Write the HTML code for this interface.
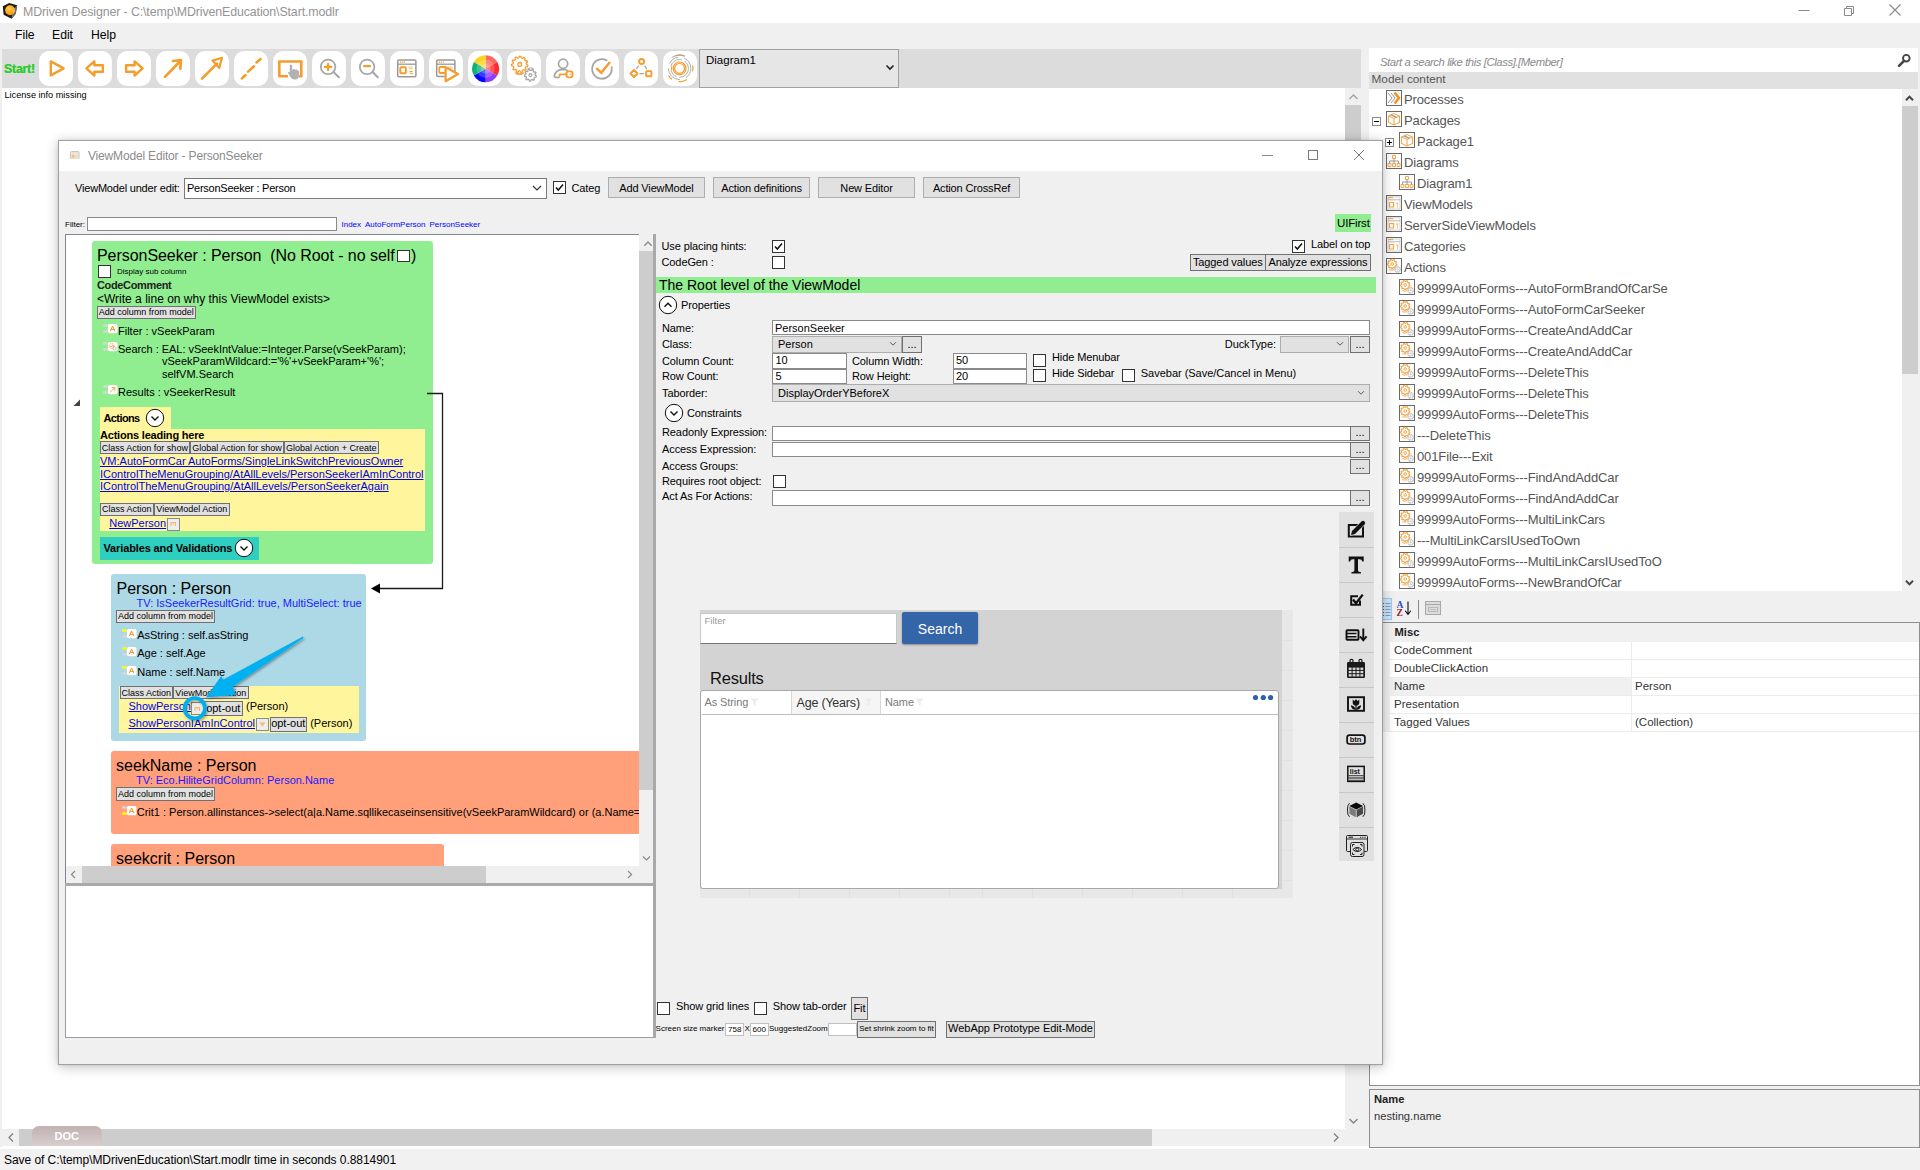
<!DOCTYPE html>
<html><head><meta charset="utf-8"><title>MDriven Designer</title><style>
html,body{margin:0;padding:0;}
body{width:1920px;height:1170px;overflow:hidden;background:#fff;font-family:"Liberation Sans",sans-serif;position:relative;}
.a{position:absolute;box-sizing:border-box;}
.t{position:absolute;white-space:nowrap;line-height:1;font-family:"Liberation Sans",sans-serif;}
.b{font-weight:bold;}
.i{font-style:italic;}
.u{text-decoration:underline;}
.btn{position:absolute;box-sizing:border-box;background:#e1e1e1;border:1px solid #707070;}
.inp{position:absolute;box-sizing:border-box;background:#fff;border:1px solid #7a7a7a;}
.chk{position:absolute;box-sizing:border-box;background:#fff;border:1px solid #333;width:13px;height:13px;}
</style></head><body>
<div class="a" style="left:0px;top:0px;width:1920px;height:23px;background:#fff;"></div>
<svg class="a" style="left:0px;top:0px;" width="22" height="22" viewBox="0 0 22 22"><defs><radialGradient id="og" cx="0.42" cy="0.35" r="0.75"><stop offset="0" stop-color="#ffd24a"/><stop offset="0.55" stop-color="#ffa620"/><stop offset="1" stop-color="#ff8a00"/></radialGradient></defs><path d="M2.8 6.2 L9.2 3 L17.1 5.3 L15.8 13.7 L11.5 18.8 L3.6 14.7 Z" fill="#1c1c1c"/><path d="M17.1 5.3 L15.8 13.7 L11.5 18.8 L12.3 10.5 Z" fill="#6e6e6e"/><circle cx="10" cy="10.25" r="4.9" fill="url(#og)"/><path d="M13.6 7.2 Q15.6 10.4 13.2 13.6 Q14.2 10.4 13.6 7.2 Z" fill="#fff6a0" opacity="0.8"/></svg>
<div class="t" style="left:23px;top:6.00px;font-size:12.4px;color:#949494;letter-spacing:-0.12px">MDriven Designer - C:\temp\MDrivenEducation\Start.modlr</div>
<svg class="a" style="left:1797px;top:4px;" width="16" height="12" viewBox="0 0 16 12"><path d="M1.5 6.5H12.5" stroke="#8a8a8a" stroke-width="1" fill="none"/></svg>
<svg class="a" style="left:1842px;top:3px;" width="14" height="14" viewBox="0 0 14 14"><path d="M2.5 5.5h7v7h-7z M4.5 5.5v-2h7v7h-2" stroke="#8a8a8a" stroke-width="1" fill="none"/></svg>
<svg class="a" style="left:1888px;top:3px;" width="14" height="14" viewBox="0 0 14 14"><path d="M1.5 1.5L12.5 12.5M12.5 1.5L1.5 12.5" stroke="#8a8a8a" stroke-width="1.1" fill="none"/></svg>
<div class="a" style="left:0px;top:23px;width:1920px;height:26px;background:#f0f0f0;"></div>
<div class="t" style="left:15px;top:29.17px;font-size:12.2px;color:#000;">File</div>
<div class="t" style="left:52px;top:29.17px;font-size:12.2px;color:#000;">Edit</div>
<div class="t" style="left:91px;top:29.17px;font-size:12.2px;color:#000;">Help</div>
<div class="a" style="left:2px;top:49px;width:1366px;height:39px;background:#dcdcdc;"></div>
<div class="a" style="left:1361px;top:49px;width:8px;height:39px;background:#f0f0f0;"></div>
<div class="t" style="left:4px;top:62.92px;font-size:12.5px;color:#2ecc2e;font-weight:bold;letter-spacing:-0.3px;text-shadow:0 0 0.6px #2ecc2e">Start!</div>
<div class="a" style="left:39px;top:51px;width:34px;height:35px;background:#fff;border-radius:10px;"></div>
<svg class="a" style="left:39px;top:51px;" width="34" height="35" viewBox="0 0 34 35"><path d="M11.8 10.4 L11.8 24.4 L24.6 17.4 Z" fill="none" stroke="#f59c2a" stroke-width="2.4" stroke-linejoin="round"/></svg>
<div class="a" style="left:78px;top:51px;width:34px;height:35px;background:#fff;border-radius:10px;"></div>
<svg class="a" style="left:78px;top:51px;" width="34" height="35" viewBox="0 0 34 35"><path d="M8.4 17.4 L16.4 10.4 L16.4 14.2 L24.9 14.2 L24.9 20.7 L16.4 20.7 L16.4 24.5 Z" fill="none" stroke="#f59c2a" stroke-width="2.4" stroke-linejoin="round"/></svg>
<div class="a" style="left:117px;top:51px;width:34px;height:35px;background:#fff;border-radius:10px;"></div>
<svg class="a" style="left:117px;top:51px;" width="34" height="35" viewBox="0 0 34 35"><path d="M25.6 17.4 L17.6 10.4 L17.6 14.2 L9.1 14.2 L9.1 20.7 L17.6 20.7 L17.6 24.5 Z" fill="none" stroke="#f59c2a" stroke-width="2.4" stroke-linejoin="round"/></svg>
<div class="a" style="left:156px;top:51px;width:34px;height:35px;background:#fff;border-radius:10px;"></div>
<svg class="a" style="left:156px;top:51px;" width="34" height="35" viewBox="0 0 34 35"><path d="M9 25.9 L24.6 9.7 M17 10 L25 9.2 L24.3 17.6" stroke="#f59c2a" stroke-width="2.7" fill="none" stroke-linecap="round" stroke-linejoin="round"/></svg>
<div class="a" style="left:195px;top:51px;width:34px;height:35px;background:#fff;border-radius:10px;"></div>
<svg class="a" style="left:195px;top:51px;" width="34" height="35" viewBox="0 0 34 35"><path d="M7 27.6 L22 12.6" stroke="#f59c2a" stroke-width="2.6" fill="none" stroke-linecap="round"/><path d="M17.5 9.6 L27 6.8 L24.3 16.9 Z" fill="none" stroke="#f59c2a" stroke-width="2.2" stroke-linejoin="round"/></svg>
<div class="a" style="left:234px;top:51px;width:34px;height:35px;background:#fff;border-radius:10px;"></div>
<svg class="a" style="left:234px;top:51px;" width="34" height="35" viewBox="0 0 34 35"><path d="M7.9 27.5 L11.6 24 M14.1 20.6 L20 15.25 M22.5 11.5 L26.6 8" stroke="#f59c2a" stroke-width="2.5" fill="none" stroke-linecap="round"/></svg>
<div class="a" style="left:273px;top:51px;width:34px;height:35px;background:#fff;border-radius:10px;"></div>
<svg class="a" style="left:273px;top:51px;" width="34" height="35" viewBox="0 0 34 35"><path d="M15 25.2 H6.3 V10.5 H28.3 V25.2 H25.8" fill="none" stroke="#f59c2a" stroke-width="2.6" stroke-linejoin="round"/><path d="M16.8 14.2 q1.2 -1.6 2.4 0 v5 l1.4 -1.1 q1.2 -0.6 1.6 0.6 l1.2 -0.3 q1.1 0 1.2 1 l0.6 0 q0.9 0.3 0.8 1.4 v3.5 q-0.3 4.2 -4 4.2 q-3.2 0.2 -4.6 -2.6 l-2.4 -4.2 q0 -1.6 1.8 -0.8 z" fill="#b2b2b2"/></svg>
<div class="a" style="left:312px;top:51px;width:34px;height:35px;background:#fff;border-radius:10px;"></div>
<svg class="a" style="left:312px;top:51px;" width="34" height="35" viewBox="0 0 34 35"><circle cx="16.1" cy="15.9" r="7.3" fill="none" stroke="#a6a6a6" stroke-width="1.7"/><path d="M21.5 21 L26.8 26.3" stroke="#a6a6a6" stroke-width="2" fill="none" stroke-linecap="round"/><path d="M13 15.9h6.2M16.1 12.8v6.2" stroke="#f59c2a" stroke-width="2.3" fill="none" stroke-linecap="round"/></svg>
<div class="a" style="left:351px;top:51px;width:34px;height:35px;background:#fff;border-radius:10px;"></div>
<svg class="a" style="left:351px;top:51px;" width="34" height="35" viewBox="0 0 34 35"><circle cx="16.1" cy="15.9" r="7.3" fill="none" stroke="#a6a6a6" stroke-width="1.7"/><path d="M21.5 21 L26.8 26.3" stroke="#a6a6a6" stroke-width="2" fill="none" stroke-linecap="round"/><path d="M13.2 15.2h5.8" stroke="#f59c2a" stroke-width="2.3" fill="none" stroke-linecap="round"/></svg>
<div class="a" style="left:390px;top:51px;width:34px;height:35px;background:#fff;border-radius:10px;"></div>
<svg class="a" style="left:390px;top:51px;" width="34" height="35" viewBox="0 0 34 35"><rect x="7.7" y="9" width="18.2" height="16.8" rx="1.2" fill="none" stroke="#999" stroke-width="1.5"/><path d="M7.7 13.2h18.2" stroke="#999" stroke-width="1.3"/><path d="M9.8 11.2h5" stroke="#f59c2a" stroke-width="1.3" stroke-dasharray="1.2 0.7"/><rect x="10.3" y="16.3" width="5.6" height="6" rx="1" fill="none" stroke="#f59c2a" stroke-width="1.9"/><rect x="18.6" y="15.4" width="4" height="3" fill="#fbd3a0"/><path d="M19.5 20.6h3.2M20.5 22.7h2.2" stroke="#f59c2a" stroke-width="1.2"/></svg>
<div class="a" style="left:429px;top:51px;width:34px;height:35px;background:#fff;border-radius:10px;"></div>
<svg class="a" style="left:429px;top:51px;" width="34" height="35" viewBox="0 0 34 35"><rect x="7.7" y="9" width="18.2" height="16.4" rx="1.2" fill="none" stroke="#999" stroke-width="1.5"/><path d="M7.7 13.2h18.2" stroke="#999" stroke-width="1.3"/><path d="M9.8 11.2h5" stroke="#f59c2a" stroke-width="1.3" stroke-dasharray="1.2 0.7"/><rect x="10.3" y="16" width="6.5" height="6" rx="1" fill="none" stroke="#f59c2a" stroke-width="1.8"/><rect x="18.6" y="15.4" width="5" height="2.4" fill="#fbd3a0"/><path d="M16.6 16.3 L16.6 30.2 L29 23 Z" fill="#fff" stroke="#f59c2a" stroke-width="2.2" stroke-linejoin="round"/></svg>
<div class="a" style="left:468px;top:51px;width:34px;height:35px;background:#fff;border-radius:10px;"></div>
<svg class="a" style="left:468px;top:51px;" width="34" height="35" viewBox="0 0 34 35"><path d="M17.6 17.75 L17.60 4.25 A13.5 13.5 0 0 1 29.35 11.10 Z" fill="#ff6a60"/><path d="M17.6 17.75 L29.29 11.00 A13.5 13.5 0 0 1 29.23 24.60 Z" fill="#ff2a2e"/><path d="M17.6 17.75 L29.29 24.50 A13.5 13.5 0 0 1 17.48 31.25 Z" fill="#8f3cff"/><path d="M17.6 17.75 L17.60 31.25 A13.5 13.5 0 0 1 5.85 24.40 Z" fill="#0808ff"/><path d="M17.6 17.75 L5.91 24.50 A13.5 13.5 0 0 1 5.97 10.90 Z" fill="#10b27c"/><path d="M17.6 17.75 L5.91 11.00 A13.5 13.5 0 0 1 17.72 4.25 Z" fill="#ffd21f"/><circle cx="17.6" cy="17.75" r="9.2" fill="#fff" opacity="0.2"/><circle cx="17.6" cy="17.75" r="5" fill="#fff" opacity="0.22"/></svg>
<div class="a" style="left:507px;top:51px;width:34px;height:35px;background:#fff;border-radius:10px;"></div>
<svg class="a" style="left:507px;top:51px;" width="34" height="35" viewBox="0 0 34 35"><path d="M19.35 13.40 L20.91 14.24 L20.62 15.71 L18.86 15.90 L18.30 16.97 L19.16 18.52 L18.12 19.60 L16.54 18.81 L15.49 19.40 L15.37 21.17 L13.92 21.52 L13.01 19.99 L11.81 19.93 L10.76 21.35 L9.34 20.86 L9.41 19.09 L8.43 18.39 L6.77 19.01 L5.85 17.83 L6.86 16.38 L6.42 15.26 L4.69 14.89 L4.55 13.40 L6.18 12.72 L6.42 11.54 L5.16 10.29 L5.85 8.97 L7.59 9.28 L8.43 8.41 L8.04 6.68 L9.34 5.94 L10.64 7.15 L11.81 6.87 L12.42 5.21 L13.92 5.28 L14.35 7.00 L15.49 7.40 L16.90 6.33 L18.12 7.20 L17.56 8.88 L18.30 9.83 L20.07 9.70 L20.62 11.09 L19.24 12.20 Z" fill="none" stroke="#f59c2a" stroke-width="1.25" stroke-linejoin="round"/><circle cx="12.75" cy="13.4" r="1.9" fill="none" stroke="#f59c2a" stroke-width="1.3"/><path d="M7.8 21.8 q5 2.2 9.6 0" stroke="#f59c2a" stroke-width="1.2" fill="none"/><path d="M9.5 23.3 q3.2 1 6 0" stroke="#f59c2a" stroke-width="0.9" fill="none"/><path d="M28.10 24.10 L29.35 24.85 L29.04 26.15 L27.58 26.25 L27.00 27.12 L27.48 28.50 L26.40 29.30 L25.22 28.43 L24.22 28.73 L23.69 30.09 L22.36 30.01 L22.01 28.59 L21.05 28.17 L19.77 28.88 L18.80 27.96 L19.45 26.65 L18.98 25.71 L17.55 25.43 L17.40 24.10 L18.74 23.51 L18.98 22.49 L18.06 21.36 L18.80 20.24 L20.21 20.65 L21.05 20.03 L21.07 18.57 L22.36 18.19 L23.17 19.41 L24.22 19.47 L25.17 18.37 L26.40 18.90 L26.24 20.36 L27.00 21.08 L28.44 20.85 L29.04 22.05 L27.98 23.06 Z" fill="none" stroke="#a6a6a6" stroke-width="1.25" stroke-linejoin="round"/><circle cx="23.4" cy="24.1" r="1.5" fill="none" stroke="#a6a6a6" stroke-width="1.2"/><path d="M20.5 17.6 q3 -1.6 6 0" stroke="#a6a6a6" stroke-width="0.9" fill="none"/></svg>
<div class="a" style="left:546px;top:51px;width:34px;height:35px;background:#fff;border-radius:10px;"></div>
<svg class="a" style="left:546px;top:51px;" width="34" height="35" viewBox="0 0 34 35"><circle cx="17.1" cy="12.75" r="4.6" fill="none" stroke="#a6a6a6" stroke-width="1.7"/><path d="M13 26.3 H9.5 Q8 26.3 8.4 24.6 Q9.8 18.6 17 18.3 Q19.6 18.4 21.2 19.4" fill="none" stroke="#a6a6a6" stroke-width="1.7" stroke-linecap="round"/><rect x="20.5" y="20.4" width="6" height="6" rx="1.8" fill="none" stroke="#f59c2a" stroke-width="1.9"/><path d="M20.5 23.4 H14.2 Q13.2 23.6 13.6 24.8" stroke="#f59c2a" stroke-width="1.9" fill="none" stroke-linecap="round"/><circle cx="24.2" cy="23.2" r="0.7" fill="#f59c2a"/></svg>
<div class="a" style="left:585px;top:51px;width:34px;height:35px;background:#fff;border-radius:10px;"></div>
<svg class="a" style="left:585px;top:51px;" width="34" height="35" viewBox="0 0 34 35"><path d="M21.6 9.3 A9.8 9.8 0 1 0 26.6 16.2" fill="none" stroke="#a6a6a6" stroke-width="1.8" stroke-linecap="round"/><path d="M11.3 17.1 L16.3 21.8 L25 10.9" fill="none" stroke="#f59c2a" stroke-width="2.4" stroke-linejoin="miter"/></svg>
<div class="a" style="left:624px;top:51px;width:34px;height:35px;background:#fff;border-radius:10px;"></div>
<svg class="a" style="left:624px;top:51px;" width="34" height="35" viewBox="0 0 34 35"><circle cx="17.6" cy="10.5" r="2.5" fill="none" stroke="#f59c2a" stroke-width="1.9"/><path d="M10 19 l3.5 3.5 l-3.5 3.5 l-3.5 -3.5 z" fill="none" stroke="#f59c2a" stroke-width="1.9" stroke-linejoin="round"/><rect x="22.2" y="20.1" width="5.2" height="5.2" rx="0.6" fill="none" stroke="#f59c2a" stroke-width="1.9"/><path d="M14.6 14.6 l-2.2 3.2 M20.6 14.6 l2.2 3.2 M15.5 22.7 h4.4" stroke="#a6a6a6" stroke-width="1.2" fill="none"/></svg>
<div class="a" style="left:663px;top:51px;width:34px;height:35px;background:#fff;border-radius:10px;"></div>
<svg class="a" style="left:663px;top:51px;" width="34" height="35" viewBox="0 0 34 35"><circle cx="16.6" cy="17.4" r="4.9" fill="none" stroke="#f59c2a" stroke-width="1.2"/><circle cx="16.6" cy="17.4" r="6.4" fill="none" stroke="#f59c2a" stroke-width="1.2"/><circle cx="16.6" cy="17.4" r="8.9" fill="none" stroke="#a6a6a6" stroke-width="0.9" stroke-dasharray="14 3 9 4"/><circle cx="16.6" cy="17.4" r="11.2" fill="none" stroke="#a6a6a6" stroke-width="0.9" stroke-dasharray="11 6 18 5"/><path d="M8.6 19 v-3.4" stroke="#f59c2a" stroke-width="1.2"/><circle cx="16.6" cy="17.4" r="13.3" fill="none" stroke="#f59c2a" stroke-width="1.2" stroke-dasharray="7 9 0 4 6 10 9 7 5 24" transform="rotate(-100 16.6 17.4)"/><circle cx="16.6" cy="17.4" r="13.3" fill="none" stroke="#a6a6a6" stroke-width="0.9" stroke-dasharray="0 40 14 100" transform="rotate(60 16.6 17.4)"/></svg>
<div class="a" style="left:699px;top:49px;width:200px;height:39px;background:#e6e6e6;border:1px solid #a0a0a0;"></div>
<div class="t" style="left:706px;top:54.77px;font-size:11.5px;color:#000;">Diagram1</div>
<svg class="a" style="left:885px;top:64px;" width="10" height="8" viewBox="0 0 10 8"><path d="M1.5 1.5 L5 5 L8.5 1.5" stroke="#222" stroke-width="1.6" fill="none"/></svg>
<div class="t" style="left:4.5px;top:91.05px;font-size:9.15px;color:#000;">License info missing</div>
<div class="a" style="left:1345px;top:88px;width:16px;height:1041px;background:#f0f0f0;"></div>
<div class="a" style="left:1345px;top:105px;width:16px;height:38px;background:#cdcdcd;"></div>
<svg class="a" style="left:1348px;top:93px;" width="11" height="8" viewBox="0 0 11 8"><path d="M1.5 6 L5.5 2 L9.5 6" stroke="#a0a0a0" stroke-width="1.3" fill="none"/></svg>
<svg class="a" style="left:1348px;top:1117px;" width="11" height="8" viewBox="0 0 11 8"><path d="M1.5 2 L5.5 6 L9.5 2" stroke="#808080" stroke-width="1.3" fill="none"/></svg>
<div class="a" style="left:1361px;top:88px;width:8px;height:1058px;background:#f0f0f0;"></div>
<div class="a" style="left:0px;top:1129px;width:1345px;height:17px;background:#f0f0f0;"></div>
<div class="a" style="left:19px;top:1129px;width:1133px;height:17px;background:#cdcdcd;"></div>
<svg class="a" style="left:7px;top:1132px;" width="8" height="11" viewBox="0 0 8 11"><path d="M6 1.5 L2 5.5 L6 9.5" stroke="#808080" stroke-width="1.3" fill="none"/></svg>
<svg class="a" style="left:1332px;top:1132px;" width="8" height="11" viewBox="0 0 8 11"><path d="M2 1.5 L6 5.5 L2 9.5" stroke="#808080" stroke-width="1.3" fill="none"/></svg>
<div class="a" style="left:1345px;top:1129px;width:17px;height:17px;background:#f0f0f0;"></div>
<div class="a" style="left:32px;top:1126px;width:70px;height:20px;border-radius:7px 7px 0 0;background:linear-gradient(#c2b2b2,#d9cdcd);"></div>
<div class="t" style="left:54.5px;top:1131.19px;font-size:11px;color:#fff;font-weight:bold;">DOC</div>
<div class="a" style="left:0px;top:49px;width:2px;height:1098px;background:#f0f0f0;"></div>
<div class="a" style="left:0px;top:1149px;width:1920px;height:21px;background:#f1f1f1;"></div>
<div class="t" style="left:4px;top:1153.64px;font-size:12px;color:#000;letter-spacing:-0.06px">Save of C:\temp\MDrivenEducation\Start.modlr time in seconds 0.8814901</div>
<div class="a" style="left:1369px;top:48px;width:551px;height:24px;background:#fff;"></div>
<div class="t" style="left:1380px;top:56.93px;font-size:11.3px;color:#8a8a8a;font-style:italic;letter-spacing:-0.42px">Start a search like this [Class].[Member]</div>
<svg class="a" style="left:1897px;top:53px;" width="15" height="15" viewBox="0 0 15 15"><circle cx="9.3" cy="5.2" r="3.3" fill="none" stroke="#444" stroke-width="1.9"/><path d="M7 7.8 L2 12.8" stroke="#444" stroke-width="2.6" stroke-linecap="round"/></svg>
<div class="a" style="left:1369px;top:72px;width:551px;height:17px;background:#e1e1e1;"></div>
<div class="t" style="left:1371.5px;top:74.31px;font-size:11.8px;color:#555;letter-spacing:0px">Model content</div>
<div class="a" style="left:1369px;top:89px;width:533px;height:502px;background:#fff;"></div>
<div class="a" style="left:1902px;top:89px;width:16px;height:502px;background:#f0f0f0;"></div>
<div class="a" style="left:1902px;top:106px;width:16px;height:268px;background:#cdcdcd;"></div>
<svg class="a" style="left:1904px;top:94px;" width="11" height="8" viewBox="0 0 11 8"><path d="M2 6.2 L5.5 2.6 L9 6.2" stroke="#444" stroke-width="2" fill="none"/></svg>
<svg class="a" style="left:1904px;top:579px;" width="11" height="8" viewBox="0 0 11 8"><path d="M2 1.8 L5.5 5.4 L9 1.8" stroke="#444" stroke-width="2" fill="none"/></svg>
<div class="a" style="left:1918px;top:48px;width:2px;height:574px;background:#f0f0f0;"></div>
<svg class="a" style="left:1386px;top:90px;" width="16" height="16" viewBox="0 0 16 16"><rect x="0.5" y="0.5" width="15" height="15" fill="#fff" stroke="#6a6a6a" stroke-width="1"/><path d="M2 3 L6 8 L2 13 M5 3 L9 8 L5 13" fill="none" stroke="#9a9a9a" stroke-width="1"/><path d="M8.5 2.5 L13 8 L8.5 13.5" fill="none" stroke="#f7941d" stroke-width="2.6"/></svg>
<div class="t" style="left:1404px;top:93.20px;font-size:13px;color:#555;letter-spacing:-0.12px">Processes</div>
<svg class="a" style="left:1386px;top:111px;" width="16" height="16" viewBox="0 0 16 16"><rect x="0.5" y="0.5" width="15" height="15" fill="#fff" stroke="#6a6a6a" stroke-width="1"/><path d="M2.5 5 L8 2.5 L13.5 5 V11.5 L8 14 L2.5 11.5 Z M2.5 5 L8 7.5 L13.5 5 M8 7.5 V14" fill="none" stroke="#f5a94a" stroke-width="1.1"/><path d="M5 3.8 L10.5 6.3" stroke="#9a9a9a" stroke-width="1.4"/></svg>
<div class="t" style="left:1404px;top:114.20px;font-size:13px;color:#555;letter-spacing:-0.12px">Packages</div>
<svg class="a" style="left:1372px;top:116.5px;" width="9" height="9" viewBox="0 0 9 9"><rect x="0.5" y="0.5" width="8" height="8" fill="#fff" stroke="#8a8a8a"/><path d="M2 4.5H7" stroke="#000" stroke-width="1"/></svg>
<svg class="a" style="left:1399px;top:132px;" width="16" height="16" viewBox="0 0 16 16"><rect x="0.5" y="0.5" width="15" height="15" fill="#fff" stroke="#6a6a6a" stroke-width="1"/><path d="M2.5 5 L8 2.5 L13.5 5 V11.5 L8 14 L2.5 11.5 Z M2.5 5 L8 7.5 L13.5 5 M8 7.5 V14" fill="none" stroke="#f5a94a" stroke-width="1.1"/><path d="M5 3.8 L10.5 6.3" stroke="#9a9a9a" stroke-width="1.4"/></svg>
<div class="t" style="left:1417px;top:135.20px;font-size:13px;color:#555;letter-spacing:-0.12px">Package1</div>
<svg class="a" style="left:1385px;top:137.5px;" width="9" height="9" viewBox="0 0 9 9"><rect x="0.5" y="0.5" width="8" height="8" fill="#fff" stroke="#8a8a8a"/><path d="M2 4.5H7" stroke="#000" stroke-width="1"/><path d="M4.5 2V7" stroke="#000" stroke-width="1"/></svg>
<svg class="a" style="left:1386px;top:153px;" width="16" height="16" viewBox="0 0 16 16"><rect x="0.5" y="0.5" width="15" height="15" fill="#fff" stroke="#6a6a6a" stroke-width="1"/><path d="M6.5 2.5h3v3h-3z M2 10.5h3v3h-3z M6.5 10.5h3v3h-3z M11 10.5h3v3h-3z" fill="none" stroke="#f5a94a" stroke-width="1"/><path d="M8 5.5V10.5M3.5 10.5V8H12.5V10.5" fill="none" stroke="#9a9a9a" stroke-width="1"/></svg>
<div class="t" style="left:1404px;top:156.20px;font-size:13px;color:#555;letter-spacing:-0.12px">Diagrams</div>
<svg class="a" style="left:1399px;top:174px;" width="16" height="16" viewBox="0 0 16 16"><rect x="0.5" y="0.5" width="15" height="15" fill="#fff" stroke="#6a6a6a" stroke-width="1"/><path d="M6.5 2.5h3v3h-3z M2 10.5h3v3h-3z M6.5 10.5h3v3h-3z M11 10.5h3v3h-3z" fill="none" stroke="#f5a94a" stroke-width="1"/><path d="M8 5.5V10.5M3.5 10.5V8H12.5V10.5" fill="none" stroke="#9a9a9a" stroke-width="1"/></svg>
<div class="t" style="left:1417px;top:177.20px;font-size:13px;color:#555;letter-spacing:-0.12px">Diagram1</div>
<svg class="a" style="left:1386px;top:195px;" width="16" height="16" viewBox="0 0 16 16"><rect x="0.5" y="0.5" width="15" height="15" fill="#fff" stroke="#6a6a6a" stroke-width="1"/><rect x="2" y="2" width="12" height="12" fill="none" stroke="#c8c8c8" stroke-width="0.8"/><path d="M2 4.8H14" stroke="#b0b0b0" stroke-width="0.9"/><path d="M2 2.6h5" stroke="#f5a94a" stroke-width="1.1"/><path d="M3.5 7.5h4v4.5h-4z" fill="none" stroke="#f5a94a" stroke-width="1.2"/><path d="M9.5 8h3M11.5 8v4.5" stroke="#f5a94a" stroke-width="1" fill="none" opacity="0.7"/></svg>
<div class="t" style="left:1404px;top:198.20px;font-size:13px;color:#555;letter-spacing:-0.12px">ViewModels</div>
<svg class="a" style="left:1386px;top:216px;" width="16" height="16" viewBox="0 0 16 16"><rect x="0.5" y="0.5" width="15" height="15" fill="#fff" stroke="#6a6a6a" stroke-width="1"/><rect x="2" y="2" width="12" height="12" fill="none" stroke="#c8c8c8" stroke-width="0.8"/><path d="M2 4.8H14" stroke="#b0b0b0" stroke-width="0.9"/><path d="M2 2.6h5" stroke="#f5a94a" stroke-width="1.1"/><path d="M3.5 7.5h4v4.5h-4z" fill="none" stroke="#f5a94a" stroke-width="1.2"/><path d="M9.5 8h3M11.5 8v4.5" stroke="#f5a94a" stroke-width="1" fill="none" opacity="0.7"/></svg>
<div class="t" style="left:1404px;top:219.20px;font-size:13px;color:#555;letter-spacing:-0.12px">ServerSideViewModels</div>
<svg class="a" style="left:1386px;top:237px;" width="16" height="16" viewBox="0 0 16 16"><rect x="0.5" y="0.5" width="15" height="15" fill="#fff" stroke="#6a6a6a" stroke-width="1"/><rect x="2" y="2" width="12" height="12" fill="none" stroke="#c8c8c8" stroke-width="0.8"/><path d="M2 4.8H14" stroke="#b0b0b0" stroke-width="0.9"/><path d="M2 2.6h5" stroke="#f5a94a" stroke-width="1.1"/><path d="M3.5 7.5h4v4.5h-4z" fill="none" stroke="#f5a94a" stroke-width="1.2"/><path d="M9.5 8h3M11.5 8v4.5" stroke="#f5a94a" stroke-width="1" fill="none" opacity="0.7"/></svg>
<div class="t" style="left:1404px;top:240.20px;font-size:13px;color:#555;letter-spacing:-0.12px">Categories</div>
<svg class="a" style="left:1386px;top:258px;" width="16" height="16" viewBox="0 0 16 16"><rect x="0.5" y="0.5" width="15" height="15" fill="#fff" stroke="#6a6a6a" stroke-width="1"/><path d="M9.90 6.00 L10.86 6.59 L10.62 7.61 L9.49 7.69 L9.03 8.38 L9.39 9.45 L8.55 10.07 L7.63 9.41 L6.84 9.64 L6.43 10.69 L5.38 10.63 L5.11 9.53 L4.35 9.20 L3.36 9.74 L2.60 9.02 L3.09 8.00 L2.72 7.27 L1.62 7.04 L1.50 6.00 L2.53 5.54 L2.72 4.73 L2.02 3.85 L2.60 2.98 L3.69 3.29 L4.35 2.80 L4.38 1.67 L5.38 1.37 L6.02 2.30 L6.84 2.36 L7.59 1.51 L8.55 1.93 L8.44 3.05 L9.03 3.62 L10.15 3.45 L10.62 4.39 L9.81 5.18 Z" fill="none" stroke="#f5a94a" stroke-width="1.1" stroke-linejoin="round"/><circle cx="6.2" cy="6" r="1.3" fill="none" stroke="#f5a94a" stroke-width="1"/><path d="M3.2 11.6q3 1.2 5 0" stroke="#f5a94a" stroke-width="0.9" fill="none"/><path d="M13.90 11.40 L14.67 11.84 L14.46 12.59 L13.58 12.57 L13.23 13.03 L13.46 13.88 L12.79 14.26 L12.17 13.63 L11.60 13.70 L11.16 14.47 L10.41 14.26 L10.43 13.38 L9.97 13.03 L9.12 13.26 L8.74 12.59 L9.37 11.97 L9.30 11.40 L8.53 10.96 L8.74 10.21 L9.62 10.23 L9.97 9.77 L9.74 8.92 L10.41 8.54 L11.03 9.17 L11.60 9.10 L12.04 8.33 L12.79 8.54 L12.77 9.42 L13.23 9.77 L14.08 9.54 L14.46 10.21 L13.83 10.83 Z" fill="none" stroke="#c0c0c0" stroke-width="1" stroke-linejoin="round"/><circle cx="11.6" cy="11.4" r="0.8" fill="none" stroke="#c0c0c0" stroke-width="0.8"/></svg>
<div class="t" style="left:1404px;top:261.20px;font-size:13px;color:#555;letter-spacing:-0.12px">Actions</div>
<svg class="a" style="left:1399px;top:279px;" width="16" height="16" viewBox="0 0 16 16"><rect x="0.5" y="0.5" width="15" height="15" fill="#fff" stroke="#6a6a6a" stroke-width="1"/><path d="M9.90 6.00 L10.86 6.59 L10.62 7.61 L9.49 7.69 L9.03 8.38 L9.39 9.45 L8.55 10.07 L7.63 9.41 L6.84 9.64 L6.43 10.69 L5.38 10.63 L5.11 9.53 L4.35 9.20 L3.36 9.74 L2.60 9.02 L3.09 8.00 L2.72 7.27 L1.62 7.04 L1.50 6.00 L2.53 5.54 L2.72 4.73 L2.02 3.85 L2.60 2.98 L3.69 3.29 L4.35 2.80 L4.38 1.67 L5.38 1.37 L6.02 2.30 L6.84 2.36 L7.59 1.51 L8.55 1.93 L8.44 3.05 L9.03 3.62 L10.15 3.45 L10.62 4.39 L9.81 5.18 Z" fill="none" stroke="#f5a94a" stroke-width="1.1" stroke-linejoin="round"/><circle cx="6.2" cy="6" r="1.3" fill="none" stroke="#f5a94a" stroke-width="1"/><path d="M3.2 11.6q3 1.2 5 0" stroke="#f5a94a" stroke-width="0.9" fill="none"/><path d="M13.90 11.40 L14.67 11.84 L14.46 12.59 L13.58 12.57 L13.23 13.03 L13.46 13.88 L12.79 14.26 L12.17 13.63 L11.60 13.70 L11.16 14.47 L10.41 14.26 L10.43 13.38 L9.97 13.03 L9.12 13.26 L8.74 12.59 L9.37 11.97 L9.30 11.40 L8.53 10.96 L8.74 10.21 L9.62 10.23 L9.97 9.77 L9.74 8.92 L10.41 8.54 L11.03 9.17 L11.60 9.10 L12.04 8.33 L12.79 8.54 L12.77 9.42 L13.23 9.77 L14.08 9.54 L14.46 10.21 L13.83 10.83 Z" fill="none" stroke="#c0c0c0" stroke-width="1" stroke-linejoin="round"/><circle cx="11.6" cy="11.4" r="0.8" fill="none" stroke="#c0c0c0" stroke-width="0.8"/></svg>
<div class="t" style="left:1417px;top:282.20px;font-size:13px;color:#555;letter-spacing:-0.12px">99999AutoForms---AutoFormBrandOfCarSe</div>
<svg class="a" style="left:1399px;top:300px;" width="16" height="16" viewBox="0 0 16 16"><rect x="0.5" y="0.5" width="15" height="15" fill="#fff" stroke="#6a6a6a" stroke-width="1"/><path d="M9.90 6.00 L10.86 6.59 L10.62 7.61 L9.49 7.69 L9.03 8.38 L9.39 9.45 L8.55 10.07 L7.63 9.41 L6.84 9.64 L6.43 10.69 L5.38 10.63 L5.11 9.53 L4.35 9.20 L3.36 9.74 L2.60 9.02 L3.09 8.00 L2.72 7.27 L1.62 7.04 L1.50 6.00 L2.53 5.54 L2.72 4.73 L2.02 3.85 L2.60 2.98 L3.69 3.29 L4.35 2.80 L4.38 1.67 L5.38 1.37 L6.02 2.30 L6.84 2.36 L7.59 1.51 L8.55 1.93 L8.44 3.05 L9.03 3.62 L10.15 3.45 L10.62 4.39 L9.81 5.18 Z" fill="none" stroke="#f5a94a" stroke-width="1.1" stroke-linejoin="round"/><circle cx="6.2" cy="6" r="1.3" fill="none" stroke="#f5a94a" stroke-width="1"/><path d="M3.2 11.6q3 1.2 5 0" stroke="#f5a94a" stroke-width="0.9" fill="none"/><path d="M13.90 11.40 L14.67 11.84 L14.46 12.59 L13.58 12.57 L13.23 13.03 L13.46 13.88 L12.79 14.26 L12.17 13.63 L11.60 13.70 L11.16 14.47 L10.41 14.26 L10.43 13.38 L9.97 13.03 L9.12 13.26 L8.74 12.59 L9.37 11.97 L9.30 11.40 L8.53 10.96 L8.74 10.21 L9.62 10.23 L9.97 9.77 L9.74 8.92 L10.41 8.54 L11.03 9.17 L11.60 9.10 L12.04 8.33 L12.79 8.54 L12.77 9.42 L13.23 9.77 L14.08 9.54 L14.46 10.21 L13.83 10.83 Z" fill="none" stroke="#c0c0c0" stroke-width="1" stroke-linejoin="round"/><circle cx="11.6" cy="11.4" r="0.8" fill="none" stroke="#c0c0c0" stroke-width="0.8"/></svg>
<div class="t" style="left:1417px;top:303.20px;font-size:13px;color:#555;letter-spacing:-0.12px">99999AutoForms---AutoFormCarSeeker</div>
<svg class="a" style="left:1399px;top:321px;" width="16" height="16" viewBox="0 0 16 16"><rect x="0.5" y="0.5" width="15" height="15" fill="#fff" stroke="#6a6a6a" stroke-width="1"/><path d="M9.90 6.00 L10.86 6.59 L10.62 7.61 L9.49 7.69 L9.03 8.38 L9.39 9.45 L8.55 10.07 L7.63 9.41 L6.84 9.64 L6.43 10.69 L5.38 10.63 L5.11 9.53 L4.35 9.20 L3.36 9.74 L2.60 9.02 L3.09 8.00 L2.72 7.27 L1.62 7.04 L1.50 6.00 L2.53 5.54 L2.72 4.73 L2.02 3.85 L2.60 2.98 L3.69 3.29 L4.35 2.80 L4.38 1.67 L5.38 1.37 L6.02 2.30 L6.84 2.36 L7.59 1.51 L8.55 1.93 L8.44 3.05 L9.03 3.62 L10.15 3.45 L10.62 4.39 L9.81 5.18 Z" fill="none" stroke="#f5a94a" stroke-width="1.1" stroke-linejoin="round"/><circle cx="6.2" cy="6" r="1.3" fill="none" stroke="#f5a94a" stroke-width="1"/><path d="M3.2 11.6q3 1.2 5 0" stroke="#f5a94a" stroke-width="0.9" fill="none"/><path d="M13.90 11.40 L14.67 11.84 L14.46 12.59 L13.58 12.57 L13.23 13.03 L13.46 13.88 L12.79 14.26 L12.17 13.63 L11.60 13.70 L11.16 14.47 L10.41 14.26 L10.43 13.38 L9.97 13.03 L9.12 13.26 L8.74 12.59 L9.37 11.97 L9.30 11.40 L8.53 10.96 L8.74 10.21 L9.62 10.23 L9.97 9.77 L9.74 8.92 L10.41 8.54 L11.03 9.17 L11.60 9.10 L12.04 8.33 L12.79 8.54 L12.77 9.42 L13.23 9.77 L14.08 9.54 L14.46 10.21 L13.83 10.83 Z" fill="none" stroke="#c0c0c0" stroke-width="1" stroke-linejoin="round"/><circle cx="11.6" cy="11.4" r="0.8" fill="none" stroke="#c0c0c0" stroke-width="0.8"/></svg>
<div class="t" style="left:1417px;top:324.20px;font-size:13px;color:#555;letter-spacing:-0.12px">99999AutoForms---CreateAndAddCar</div>
<svg class="a" style="left:1399px;top:342px;" width="16" height="16" viewBox="0 0 16 16"><rect x="0.5" y="0.5" width="15" height="15" fill="#fff" stroke="#6a6a6a" stroke-width="1"/><path d="M9.90 6.00 L10.86 6.59 L10.62 7.61 L9.49 7.69 L9.03 8.38 L9.39 9.45 L8.55 10.07 L7.63 9.41 L6.84 9.64 L6.43 10.69 L5.38 10.63 L5.11 9.53 L4.35 9.20 L3.36 9.74 L2.60 9.02 L3.09 8.00 L2.72 7.27 L1.62 7.04 L1.50 6.00 L2.53 5.54 L2.72 4.73 L2.02 3.85 L2.60 2.98 L3.69 3.29 L4.35 2.80 L4.38 1.67 L5.38 1.37 L6.02 2.30 L6.84 2.36 L7.59 1.51 L8.55 1.93 L8.44 3.05 L9.03 3.62 L10.15 3.45 L10.62 4.39 L9.81 5.18 Z" fill="none" stroke="#f5a94a" stroke-width="1.1" stroke-linejoin="round"/><circle cx="6.2" cy="6" r="1.3" fill="none" stroke="#f5a94a" stroke-width="1"/><path d="M3.2 11.6q3 1.2 5 0" stroke="#f5a94a" stroke-width="0.9" fill="none"/><path d="M13.90 11.40 L14.67 11.84 L14.46 12.59 L13.58 12.57 L13.23 13.03 L13.46 13.88 L12.79 14.26 L12.17 13.63 L11.60 13.70 L11.16 14.47 L10.41 14.26 L10.43 13.38 L9.97 13.03 L9.12 13.26 L8.74 12.59 L9.37 11.97 L9.30 11.40 L8.53 10.96 L8.74 10.21 L9.62 10.23 L9.97 9.77 L9.74 8.92 L10.41 8.54 L11.03 9.17 L11.60 9.10 L12.04 8.33 L12.79 8.54 L12.77 9.42 L13.23 9.77 L14.08 9.54 L14.46 10.21 L13.83 10.83 Z" fill="none" stroke="#c0c0c0" stroke-width="1" stroke-linejoin="round"/><circle cx="11.6" cy="11.4" r="0.8" fill="none" stroke="#c0c0c0" stroke-width="0.8"/></svg>
<div class="t" style="left:1417px;top:345.20px;font-size:13px;color:#555;letter-spacing:-0.12px">99999AutoForms---CreateAndAddCar</div>
<svg class="a" style="left:1399px;top:363px;" width="16" height="16" viewBox="0 0 16 16"><rect x="0.5" y="0.5" width="15" height="15" fill="#fff" stroke="#6a6a6a" stroke-width="1"/><path d="M9.90 6.00 L10.86 6.59 L10.62 7.61 L9.49 7.69 L9.03 8.38 L9.39 9.45 L8.55 10.07 L7.63 9.41 L6.84 9.64 L6.43 10.69 L5.38 10.63 L5.11 9.53 L4.35 9.20 L3.36 9.74 L2.60 9.02 L3.09 8.00 L2.72 7.27 L1.62 7.04 L1.50 6.00 L2.53 5.54 L2.72 4.73 L2.02 3.85 L2.60 2.98 L3.69 3.29 L4.35 2.80 L4.38 1.67 L5.38 1.37 L6.02 2.30 L6.84 2.36 L7.59 1.51 L8.55 1.93 L8.44 3.05 L9.03 3.62 L10.15 3.45 L10.62 4.39 L9.81 5.18 Z" fill="none" stroke="#f5a94a" stroke-width="1.1" stroke-linejoin="round"/><circle cx="6.2" cy="6" r="1.3" fill="none" stroke="#f5a94a" stroke-width="1"/><path d="M3.2 11.6q3 1.2 5 0" stroke="#f5a94a" stroke-width="0.9" fill="none"/><path d="M13.90 11.40 L14.67 11.84 L14.46 12.59 L13.58 12.57 L13.23 13.03 L13.46 13.88 L12.79 14.26 L12.17 13.63 L11.60 13.70 L11.16 14.47 L10.41 14.26 L10.43 13.38 L9.97 13.03 L9.12 13.26 L8.74 12.59 L9.37 11.97 L9.30 11.40 L8.53 10.96 L8.74 10.21 L9.62 10.23 L9.97 9.77 L9.74 8.92 L10.41 8.54 L11.03 9.17 L11.60 9.10 L12.04 8.33 L12.79 8.54 L12.77 9.42 L13.23 9.77 L14.08 9.54 L14.46 10.21 L13.83 10.83 Z" fill="none" stroke="#c0c0c0" stroke-width="1" stroke-linejoin="round"/><circle cx="11.6" cy="11.4" r="0.8" fill="none" stroke="#c0c0c0" stroke-width="0.8"/></svg>
<div class="t" style="left:1417px;top:366.20px;font-size:13px;color:#555;letter-spacing:-0.12px">99999AutoForms---DeleteThis</div>
<svg class="a" style="left:1399px;top:384px;" width="16" height="16" viewBox="0 0 16 16"><rect x="0.5" y="0.5" width="15" height="15" fill="#fff" stroke="#6a6a6a" stroke-width="1"/><path d="M9.90 6.00 L10.86 6.59 L10.62 7.61 L9.49 7.69 L9.03 8.38 L9.39 9.45 L8.55 10.07 L7.63 9.41 L6.84 9.64 L6.43 10.69 L5.38 10.63 L5.11 9.53 L4.35 9.20 L3.36 9.74 L2.60 9.02 L3.09 8.00 L2.72 7.27 L1.62 7.04 L1.50 6.00 L2.53 5.54 L2.72 4.73 L2.02 3.85 L2.60 2.98 L3.69 3.29 L4.35 2.80 L4.38 1.67 L5.38 1.37 L6.02 2.30 L6.84 2.36 L7.59 1.51 L8.55 1.93 L8.44 3.05 L9.03 3.62 L10.15 3.45 L10.62 4.39 L9.81 5.18 Z" fill="none" stroke="#f5a94a" stroke-width="1.1" stroke-linejoin="round"/><circle cx="6.2" cy="6" r="1.3" fill="none" stroke="#f5a94a" stroke-width="1"/><path d="M3.2 11.6q3 1.2 5 0" stroke="#f5a94a" stroke-width="0.9" fill="none"/><path d="M13.90 11.40 L14.67 11.84 L14.46 12.59 L13.58 12.57 L13.23 13.03 L13.46 13.88 L12.79 14.26 L12.17 13.63 L11.60 13.70 L11.16 14.47 L10.41 14.26 L10.43 13.38 L9.97 13.03 L9.12 13.26 L8.74 12.59 L9.37 11.97 L9.30 11.40 L8.53 10.96 L8.74 10.21 L9.62 10.23 L9.97 9.77 L9.74 8.92 L10.41 8.54 L11.03 9.17 L11.60 9.10 L12.04 8.33 L12.79 8.54 L12.77 9.42 L13.23 9.77 L14.08 9.54 L14.46 10.21 L13.83 10.83 Z" fill="none" stroke="#c0c0c0" stroke-width="1" stroke-linejoin="round"/><circle cx="11.6" cy="11.4" r="0.8" fill="none" stroke="#c0c0c0" stroke-width="0.8"/></svg>
<div class="t" style="left:1417px;top:387.20px;font-size:13px;color:#555;letter-spacing:-0.12px">99999AutoForms---DeleteThis</div>
<svg class="a" style="left:1399px;top:405px;" width="16" height="16" viewBox="0 0 16 16"><rect x="0.5" y="0.5" width="15" height="15" fill="#fff" stroke="#6a6a6a" stroke-width="1"/><path d="M9.90 6.00 L10.86 6.59 L10.62 7.61 L9.49 7.69 L9.03 8.38 L9.39 9.45 L8.55 10.07 L7.63 9.41 L6.84 9.64 L6.43 10.69 L5.38 10.63 L5.11 9.53 L4.35 9.20 L3.36 9.74 L2.60 9.02 L3.09 8.00 L2.72 7.27 L1.62 7.04 L1.50 6.00 L2.53 5.54 L2.72 4.73 L2.02 3.85 L2.60 2.98 L3.69 3.29 L4.35 2.80 L4.38 1.67 L5.38 1.37 L6.02 2.30 L6.84 2.36 L7.59 1.51 L8.55 1.93 L8.44 3.05 L9.03 3.62 L10.15 3.45 L10.62 4.39 L9.81 5.18 Z" fill="none" stroke="#f5a94a" stroke-width="1.1" stroke-linejoin="round"/><circle cx="6.2" cy="6" r="1.3" fill="none" stroke="#f5a94a" stroke-width="1"/><path d="M3.2 11.6q3 1.2 5 0" stroke="#f5a94a" stroke-width="0.9" fill="none"/><path d="M13.90 11.40 L14.67 11.84 L14.46 12.59 L13.58 12.57 L13.23 13.03 L13.46 13.88 L12.79 14.26 L12.17 13.63 L11.60 13.70 L11.16 14.47 L10.41 14.26 L10.43 13.38 L9.97 13.03 L9.12 13.26 L8.74 12.59 L9.37 11.97 L9.30 11.40 L8.53 10.96 L8.74 10.21 L9.62 10.23 L9.97 9.77 L9.74 8.92 L10.41 8.54 L11.03 9.17 L11.60 9.10 L12.04 8.33 L12.79 8.54 L12.77 9.42 L13.23 9.77 L14.08 9.54 L14.46 10.21 L13.83 10.83 Z" fill="none" stroke="#c0c0c0" stroke-width="1" stroke-linejoin="round"/><circle cx="11.6" cy="11.4" r="0.8" fill="none" stroke="#c0c0c0" stroke-width="0.8"/></svg>
<div class="t" style="left:1417px;top:408.20px;font-size:13px;color:#555;letter-spacing:-0.12px">99999AutoForms---DeleteThis</div>
<svg class="a" style="left:1399px;top:426px;" width="16" height="16" viewBox="0 0 16 16"><rect x="0.5" y="0.5" width="15" height="15" fill="#fff" stroke="#6a6a6a" stroke-width="1"/><path d="M9.90 6.00 L10.86 6.59 L10.62 7.61 L9.49 7.69 L9.03 8.38 L9.39 9.45 L8.55 10.07 L7.63 9.41 L6.84 9.64 L6.43 10.69 L5.38 10.63 L5.11 9.53 L4.35 9.20 L3.36 9.74 L2.60 9.02 L3.09 8.00 L2.72 7.27 L1.62 7.04 L1.50 6.00 L2.53 5.54 L2.72 4.73 L2.02 3.85 L2.60 2.98 L3.69 3.29 L4.35 2.80 L4.38 1.67 L5.38 1.37 L6.02 2.30 L6.84 2.36 L7.59 1.51 L8.55 1.93 L8.44 3.05 L9.03 3.62 L10.15 3.45 L10.62 4.39 L9.81 5.18 Z" fill="none" stroke="#f5a94a" stroke-width="1.1" stroke-linejoin="round"/><circle cx="6.2" cy="6" r="1.3" fill="none" stroke="#f5a94a" stroke-width="1"/><path d="M3.2 11.6q3 1.2 5 0" stroke="#f5a94a" stroke-width="0.9" fill="none"/><path d="M13.90 11.40 L14.67 11.84 L14.46 12.59 L13.58 12.57 L13.23 13.03 L13.46 13.88 L12.79 14.26 L12.17 13.63 L11.60 13.70 L11.16 14.47 L10.41 14.26 L10.43 13.38 L9.97 13.03 L9.12 13.26 L8.74 12.59 L9.37 11.97 L9.30 11.40 L8.53 10.96 L8.74 10.21 L9.62 10.23 L9.97 9.77 L9.74 8.92 L10.41 8.54 L11.03 9.17 L11.60 9.10 L12.04 8.33 L12.79 8.54 L12.77 9.42 L13.23 9.77 L14.08 9.54 L14.46 10.21 L13.83 10.83 Z" fill="none" stroke="#c0c0c0" stroke-width="1" stroke-linejoin="round"/><circle cx="11.6" cy="11.4" r="0.8" fill="none" stroke="#c0c0c0" stroke-width="0.8"/></svg>
<div class="t" style="left:1417px;top:429.20px;font-size:13px;color:#555;letter-spacing:-0.12px">---DeleteThis</div>
<svg class="a" style="left:1399px;top:447px;" width="16" height="16" viewBox="0 0 16 16"><rect x="0.5" y="0.5" width="15" height="15" fill="#fff" stroke="#6a6a6a" stroke-width="1"/><path d="M9.90 6.00 L10.86 6.59 L10.62 7.61 L9.49 7.69 L9.03 8.38 L9.39 9.45 L8.55 10.07 L7.63 9.41 L6.84 9.64 L6.43 10.69 L5.38 10.63 L5.11 9.53 L4.35 9.20 L3.36 9.74 L2.60 9.02 L3.09 8.00 L2.72 7.27 L1.62 7.04 L1.50 6.00 L2.53 5.54 L2.72 4.73 L2.02 3.85 L2.60 2.98 L3.69 3.29 L4.35 2.80 L4.38 1.67 L5.38 1.37 L6.02 2.30 L6.84 2.36 L7.59 1.51 L8.55 1.93 L8.44 3.05 L9.03 3.62 L10.15 3.45 L10.62 4.39 L9.81 5.18 Z" fill="none" stroke="#f5a94a" stroke-width="1.1" stroke-linejoin="round"/><circle cx="6.2" cy="6" r="1.3" fill="none" stroke="#f5a94a" stroke-width="1"/><path d="M3.2 11.6q3 1.2 5 0" stroke="#f5a94a" stroke-width="0.9" fill="none"/><path d="M13.90 11.40 L14.67 11.84 L14.46 12.59 L13.58 12.57 L13.23 13.03 L13.46 13.88 L12.79 14.26 L12.17 13.63 L11.60 13.70 L11.16 14.47 L10.41 14.26 L10.43 13.38 L9.97 13.03 L9.12 13.26 L8.74 12.59 L9.37 11.97 L9.30 11.40 L8.53 10.96 L8.74 10.21 L9.62 10.23 L9.97 9.77 L9.74 8.92 L10.41 8.54 L11.03 9.17 L11.60 9.10 L12.04 8.33 L12.79 8.54 L12.77 9.42 L13.23 9.77 L14.08 9.54 L14.46 10.21 L13.83 10.83 Z" fill="none" stroke="#c0c0c0" stroke-width="1" stroke-linejoin="round"/><circle cx="11.6" cy="11.4" r="0.8" fill="none" stroke="#c0c0c0" stroke-width="0.8"/></svg>
<div class="t" style="left:1417px;top:450.20px;font-size:13px;color:#555;letter-spacing:-0.12px">001File---Exit</div>
<svg class="a" style="left:1399px;top:468px;" width="16" height="16" viewBox="0 0 16 16"><rect x="0.5" y="0.5" width="15" height="15" fill="#fff" stroke="#6a6a6a" stroke-width="1"/><path d="M9.90 6.00 L10.86 6.59 L10.62 7.61 L9.49 7.69 L9.03 8.38 L9.39 9.45 L8.55 10.07 L7.63 9.41 L6.84 9.64 L6.43 10.69 L5.38 10.63 L5.11 9.53 L4.35 9.20 L3.36 9.74 L2.60 9.02 L3.09 8.00 L2.72 7.27 L1.62 7.04 L1.50 6.00 L2.53 5.54 L2.72 4.73 L2.02 3.85 L2.60 2.98 L3.69 3.29 L4.35 2.80 L4.38 1.67 L5.38 1.37 L6.02 2.30 L6.84 2.36 L7.59 1.51 L8.55 1.93 L8.44 3.05 L9.03 3.62 L10.15 3.45 L10.62 4.39 L9.81 5.18 Z" fill="none" stroke="#f5a94a" stroke-width="1.1" stroke-linejoin="round"/><circle cx="6.2" cy="6" r="1.3" fill="none" stroke="#f5a94a" stroke-width="1"/><path d="M3.2 11.6q3 1.2 5 0" stroke="#f5a94a" stroke-width="0.9" fill="none"/><path d="M13.90 11.40 L14.67 11.84 L14.46 12.59 L13.58 12.57 L13.23 13.03 L13.46 13.88 L12.79 14.26 L12.17 13.63 L11.60 13.70 L11.16 14.47 L10.41 14.26 L10.43 13.38 L9.97 13.03 L9.12 13.26 L8.74 12.59 L9.37 11.97 L9.30 11.40 L8.53 10.96 L8.74 10.21 L9.62 10.23 L9.97 9.77 L9.74 8.92 L10.41 8.54 L11.03 9.17 L11.60 9.10 L12.04 8.33 L12.79 8.54 L12.77 9.42 L13.23 9.77 L14.08 9.54 L14.46 10.21 L13.83 10.83 Z" fill="none" stroke="#c0c0c0" stroke-width="1" stroke-linejoin="round"/><circle cx="11.6" cy="11.4" r="0.8" fill="none" stroke="#c0c0c0" stroke-width="0.8"/></svg>
<div class="t" style="left:1417px;top:471.20px;font-size:13px;color:#555;letter-spacing:-0.12px">99999AutoForms---FindAndAddCar</div>
<svg class="a" style="left:1399px;top:489px;" width="16" height="16" viewBox="0 0 16 16"><rect x="0.5" y="0.5" width="15" height="15" fill="#fff" stroke="#6a6a6a" stroke-width="1"/><path d="M9.90 6.00 L10.86 6.59 L10.62 7.61 L9.49 7.69 L9.03 8.38 L9.39 9.45 L8.55 10.07 L7.63 9.41 L6.84 9.64 L6.43 10.69 L5.38 10.63 L5.11 9.53 L4.35 9.20 L3.36 9.74 L2.60 9.02 L3.09 8.00 L2.72 7.27 L1.62 7.04 L1.50 6.00 L2.53 5.54 L2.72 4.73 L2.02 3.85 L2.60 2.98 L3.69 3.29 L4.35 2.80 L4.38 1.67 L5.38 1.37 L6.02 2.30 L6.84 2.36 L7.59 1.51 L8.55 1.93 L8.44 3.05 L9.03 3.62 L10.15 3.45 L10.62 4.39 L9.81 5.18 Z" fill="none" stroke="#f5a94a" stroke-width="1.1" stroke-linejoin="round"/><circle cx="6.2" cy="6" r="1.3" fill="none" stroke="#f5a94a" stroke-width="1"/><path d="M3.2 11.6q3 1.2 5 0" stroke="#f5a94a" stroke-width="0.9" fill="none"/><path d="M13.90 11.40 L14.67 11.84 L14.46 12.59 L13.58 12.57 L13.23 13.03 L13.46 13.88 L12.79 14.26 L12.17 13.63 L11.60 13.70 L11.16 14.47 L10.41 14.26 L10.43 13.38 L9.97 13.03 L9.12 13.26 L8.74 12.59 L9.37 11.97 L9.30 11.40 L8.53 10.96 L8.74 10.21 L9.62 10.23 L9.97 9.77 L9.74 8.92 L10.41 8.54 L11.03 9.17 L11.60 9.10 L12.04 8.33 L12.79 8.54 L12.77 9.42 L13.23 9.77 L14.08 9.54 L14.46 10.21 L13.83 10.83 Z" fill="none" stroke="#c0c0c0" stroke-width="1" stroke-linejoin="round"/><circle cx="11.6" cy="11.4" r="0.8" fill="none" stroke="#c0c0c0" stroke-width="0.8"/></svg>
<div class="t" style="left:1417px;top:492.20px;font-size:13px;color:#555;letter-spacing:-0.12px">99999AutoForms---FindAndAddCar</div>
<svg class="a" style="left:1399px;top:510px;" width="16" height="16" viewBox="0 0 16 16"><rect x="0.5" y="0.5" width="15" height="15" fill="#fff" stroke="#6a6a6a" stroke-width="1"/><path d="M9.90 6.00 L10.86 6.59 L10.62 7.61 L9.49 7.69 L9.03 8.38 L9.39 9.45 L8.55 10.07 L7.63 9.41 L6.84 9.64 L6.43 10.69 L5.38 10.63 L5.11 9.53 L4.35 9.20 L3.36 9.74 L2.60 9.02 L3.09 8.00 L2.72 7.27 L1.62 7.04 L1.50 6.00 L2.53 5.54 L2.72 4.73 L2.02 3.85 L2.60 2.98 L3.69 3.29 L4.35 2.80 L4.38 1.67 L5.38 1.37 L6.02 2.30 L6.84 2.36 L7.59 1.51 L8.55 1.93 L8.44 3.05 L9.03 3.62 L10.15 3.45 L10.62 4.39 L9.81 5.18 Z" fill="none" stroke="#f5a94a" stroke-width="1.1" stroke-linejoin="round"/><circle cx="6.2" cy="6" r="1.3" fill="none" stroke="#f5a94a" stroke-width="1"/><path d="M3.2 11.6q3 1.2 5 0" stroke="#f5a94a" stroke-width="0.9" fill="none"/><path d="M13.90 11.40 L14.67 11.84 L14.46 12.59 L13.58 12.57 L13.23 13.03 L13.46 13.88 L12.79 14.26 L12.17 13.63 L11.60 13.70 L11.16 14.47 L10.41 14.26 L10.43 13.38 L9.97 13.03 L9.12 13.26 L8.74 12.59 L9.37 11.97 L9.30 11.40 L8.53 10.96 L8.74 10.21 L9.62 10.23 L9.97 9.77 L9.74 8.92 L10.41 8.54 L11.03 9.17 L11.60 9.10 L12.04 8.33 L12.79 8.54 L12.77 9.42 L13.23 9.77 L14.08 9.54 L14.46 10.21 L13.83 10.83 Z" fill="none" stroke="#c0c0c0" stroke-width="1" stroke-linejoin="round"/><circle cx="11.6" cy="11.4" r="0.8" fill="none" stroke="#c0c0c0" stroke-width="0.8"/></svg>
<div class="t" style="left:1417px;top:513.20px;font-size:13px;color:#555;letter-spacing:-0.12px">99999AutoForms---MultiLinkCars</div>
<svg class="a" style="left:1399px;top:531px;" width="16" height="16" viewBox="0 0 16 16"><rect x="0.5" y="0.5" width="15" height="15" fill="#fff" stroke="#6a6a6a" stroke-width="1"/><path d="M9.90 6.00 L10.86 6.59 L10.62 7.61 L9.49 7.69 L9.03 8.38 L9.39 9.45 L8.55 10.07 L7.63 9.41 L6.84 9.64 L6.43 10.69 L5.38 10.63 L5.11 9.53 L4.35 9.20 L3.36 9.74 L2.60 9.02 L3.09 8.00 L2.72 7.27 L1.62 7.04 L1.50 6.00 L2.53 5.54 L2.72 4.73 L2.02 3.85 L2.60 2.98 L3.69 3.29 L4.35 2.80 L4.38 1.67 L5.38 1.37 L6.02 2.30 L6.84 2.36 L7.59 1.51 L8.55 1.93 L8.44 3.05 L9.03 3.62 L10.15 3.45 L10.62 4.39 L9.81 5.18 Z" fill="none" stroke="#f5a94a" stroke-width="1.1" stroke-linejoin="round"/><circle cx="6.2" cy="6" r="1.3" fill="none" stroke="#f5a94a" stroke-width="1"/><path d="M3.2 11.6q3 1.2 5 0" stroke="#f5a94a" stroke-width="0.9" fill="none"/><path d="M13.90 11.40 L14.67 11.84 L14.46 12.59 L13.58 12.57 L13.23 13.03 L13.46 13.88 L12.79 14.26 L12.17 13.63 L11.60 13.70 L11.16 14.47 L10.41 14.26 L10.43 13.38 L9.97 13.03 L9.12 13.26 L8.74 12.59 L9.37 11.97 L9.30 11.40 L8.53 10.96 L8.74 10.21 L9.62 10.23 L9.97 9.77 L9.74 8.92 L10.41 8.54 L11.03 9.17 L11.60 9.10 L12.04 8.33 L12.79 8.54 L12.77 9.42 L13.23 9.77 L14.08 9.54 L14.46 10.21 L13.83 10.83 Z" fill="none" stroke="#c0c0c0" stroke-width="1" stroke-linejoin="round"/><circle cx="11.6" cy="11.4" r="0.8" fill="none" stroke="#c0c0c0" stroke-width="0.8"/></svg>
<div class="t" style="left:1417px;top:534.20px;font-size:13px;color:#555;letter-spacing:-0.12px">---MultiLinkCarsIUsedToOwn</div>
<svg class="a" style="left:1399px;top:552px;" width="16" height="16" viewBox="0 0 16 16"><rect x="0.5" y="0.5" width="15" height="15" fill="#fff" stroke="#6a6a6a" stroke-width="1"/><path d="M9.90 6.00 L10.86 6.59 L10.62 7.61 L9.49 7.69 L9.03 8.38 L9.39 9.45 L8.55 10.07 L7.63 9.41 L6.84 9.64 L6.43 10.69 L5.38 10.63 L5.11 9.53 L4.35 9.20 L3.36 9.74 L2.60 9.02 L3.09 8.00 L2.72 7.27 L1.62 7.04 L1.50 6.00 L2.53 5.54 L2.72 4.73 L2.02 3.85 L2.60 2.98 L3.69 3.29 L4.35 2.80 L4.38 1.67 L5.38 1.37 L6.02 2.30 L6.84 2.36 L7.59 1.51 L8.55 1.93 L8.44 3.05 L9.03 3.62 L10.15 3.45 L10.62 4.39 L9.81 5.18 Z" fill="none" stroke="#f5a94a" stroke-width="1.1" stroke-linejoin="round"/><circle cx="6.2" cy="6" r="1.3" fill="none" stroke="#f5a94a" stroke-width="1"/><path d="M3.2 11.6q3 1.2 5 0" stroke="#f5a94a" stroke-width="0.9" fill="none"/><path d="M13.90 11.40 L14.67 11.84 L14.46 12.59 L13.58 12.57 L13.23 13.03 L13.46 13.88 L12.79 14.26 L12.17 13.63 L11.60 13.70 L11.16 14.47 L10.41 14.26 L10.43 13.38 L9.97 13.03 L9.12 13.26 L8.74 12.59 L9.37 11.97 L9.30 11.40 L8.53 10.96 L8.74 10.21 L9.62 10.23 L9.97 9.77 L9.74 8.92 L10.41 8.54 L11.03 9.17 L11.60 9.10 L12.04 8.33 L12.79 8.54 L12.77 9.42 L13.23 9.77 L14.08 9.54 L14.46 10.21 L13.83 10.83 Z" fill="none" stroke="#c0c0c0" stroke-width="1" stroke-linejoin="round"/><circle cx="11.6" cy="11.4" r="0.8" fill="none" stroke="#c0c0c0" stroke-width="0.8"/></svg>
<div class="t" style="left:1417px;top:555.20px;font-size:13px;color:#555;letter-spacing:-0.12px">99999AutoForms---MultiLinkCarsIUsedToO</div>
<svg class="a" style="left:1399px;top:573px;" width="16" height="16" viewBox="0 0 16 16"><rect x="0.5" y="0.5" width="15" height="15" fill="#fff" stroke="#6a6a6a" stroke-width="1"/><path d="M9.90 6.00 L10.86 6.59 L10.62 7.61 L9.49 7.69 L9.03 8.38 L9.39 9.45 L8.55 10.07 L7.63 9.41 L6.84 9.64 L6.43 10.69 L5.38 10.63 L5.11 9.53 L4.35 9.20 L3.36 9.74 L2.60 9.02 L3.09 8.00 L2.72 7.27 L1.62 7.04 L1.50 6.00 L2.53 5.54 L2.72 4.73 L2.02 3.85 L2.60 2.98 L3.69 3.29 L4.35 2.80 L4.38 1.67 L5.38 1.37 L6.02 2.30 L6.84 2.36 L7.59 1.51 L8.55 1.93 L8.44 3.05 L9.03 3.62 L10.15 3.45 L10.62 4.39 L9.81 5.18 Z" fill="none" stroke="#f5a94a" stroke-width="1.1" stroke-linejoin="round"/><circle cx="6.2" cy="6" r="1.3" fill="none" stroke="#f5a94a" stroke-width="1"/><path d="M3.2 11.6q3 1.2 5 0" stroke="#f5a94a" stroke-width="0.9" fill="none"/><path d="M13.90 11.40 L14.67 11.84 L14.46 12.59 L13.58 12.57 L13.23 13.03 L13.46 13.88 L12.79 14.26 L12.17 13.63 L11.60 13.70 L11.16 14.47 L10.41 14.26 L10.43 13.38 L9.97 13.03 L9.12 13.26 L8.74 12.59 L9.37 11.97 L9.30 11.40 L8.53 10.96 L8.74 10.21 L9.62 10.23 L9.97 9.77 L9.74 8.92 L10.41 8.54 L11.03 9.17 L11.60 9.10 L12.04 8.33 L12.79 8.54 L12.77 9.42 L13.23 9.77 L14.08 9.54 L14.46 10.21 L13.83 10.83 Z" fill="none" stroke="#c0c0c0" stroke-width="1" stroke-linejoin="round"/><circle cx="11.6" cy="11.4" r="0.8" fill="none" stroke="#c0c0c0" stroke-width="0.8"/></svg>
<div class="t" style="left:1417px;top:576.20px;font-size:13px;color:#555;letter-spacing:-0.12px">99999AutoForms---NewBrandOfCar</div>
<div class="a" style="left:1369px;top:591px;width:551px;height:556px;background:#f0f0f0;"></div>
<div class="a" style="left:1381px;top:598px;width:11px;height:22px;background:#cce4f7;border:1px solid #99c9ef;border-left:none;"></div>
<svg class="a" style="left:1381px;top:601px;" width="10" height="16" viewBox="0 0 10 16"><path d="M1 2.5h2M1 5.5h2M1 8.5h2M1 11.5h2M1 14.5h2" stroke="#3a6fb0" stroke-width="1"/><path d="M4.5 2.5h5M4.5 5.5h5M4.5 8.5h5M4.5 11.5h5M4.5 14.5h5" stroke="#7a9cc0" stroke-width="1"/></svg>
<div class="t" style="left:1396.5px;top:600.96px;font-size:9.5px;color:#2a4cc0;font-family:'Liberation Serif',serif;font-weight:bold;">A</div>
<div class="t" style="left:1396.5px;top:608.96px;font-size:9.5px;color:#a02030;font-family:'Liberation Serif',serif;font-weight:bold;">Z</div>
<svg class="a" style="left:1404px;top:601px;" width="8" height="15" viewBox="0 0 8 15"><path d="M4 0.5V13M1.2 9.8L4 13.5L6.8 9.8" stroke="#000" stroke-width="1.05" fill="none"/></svg>
<div class="a" style="left:1418px;top:600px;width:1px;height:19px;background:#8a8a8a;"></div>
<svg class="a" style="left:1425px;top:601px;" width="17" height="15" viewBox="0 0 17 15"><rect x="0.5" y="0.5" width="15" height="13" fill="#dcdcdc" stroke="#a8a8a8"/><path d="M0.5 3.5h15" stroke="#a8a8a8"/><rect x="3.5" y="6.5" width="9" height="4" fill="none" stroke="#b8b8b8"/><path d="M5 8.5h6" stroke="#c0c0c0"/></svg>
<div class="a" style="left:1369px;top:622px;width:551px;height:464px;background:#fff;border:1px solid #8e8e8e;"></div>
<div class="a" style="left:1370px;top:623px;width:549px;height:19px;background:#f0f0f0;"></div>
<div class="a" style="left:1370px;top:642px;width:20px;height:90px;background:#f0f0f0;"></div>
<div class="t" style="left:1394.5px;top:627.02px;font-size:11.2px;color:#222;font-weight:bold;">Misc</div>
<div class="a" style="left:1390px;top:659px;width:529px;height:1px;background:#ececec;"></div>
<div class="t" style="left:1394px;top:644.77px;font-size:11.5px;color:#333;letter-spacing:0.05px">CodeComment</div>
<div class="a" style="left:1390px;top:677px;width:529px;height:1px;background:#ececec;"></div>
<div class="t" style="left:1394px;top:662.77px;font-size:11.5px;color:#333;letter-spacing:0.05px">DoubleClickAction</div>
<div class="a" style="left:1390px;top:678px;width:241px;height:17px;background:#f0f0f0;"></div>
<div class="a" style="left:1390px;top:695px;width:529px;height:1px;background:#ececec;"></div>
<div class="t" style="left:1394px;top:680.77px;font-size:11.5px;color:#333;letter-spacing:0.05px">Name</div>
<div class="t" style="left:1635px;top:680.77px;font-size:11.5px;color:#333;">Person</div>
<div class="a" style="left:1390px;top:713px;width:529px;height:1px;background:#ececec;"></div>
<div class="t" style="left:1394px;top:698.77px;font-size:11.5px;color:#333;letter-spacing:0.05px">Presentation</div>
<div class="a" style="left:1390px;top:731px;width:529px;height:1px;background:#ececec;"></div>
<div class="t" style="left:1394px;top:716.77px;font-size:11.5px;color:#333;letter-spacing:0.05px">Tagged Values</div>
<div class="t" style="left:1635px;top:716.77px;font-size:11.5px;color:#333;">(Collection)</div>
<div class="a" style="left:1631px;top:642px;width:1px;height:90px;background:#ececec;"></div>
<div class="a" style="left:1369px;top:1089px;width:551px;height:59px;background:#f0f0f0;border:1px solid #8e8e8e;"></div>
<div class="t" style="left:1374px;top:1094.02px;font-size:11.2px;color:#222;font-weight:bold;">Name</div>
<div class="t" style="left:1374px;top:1110.52px;font-size:11.2px;color:#333;">nesting.name</div>
<div class="a" style="left:58px;top:140px;width:1325px;height:925px;background:#f0f0f0;border:1px solid #a0a0a0;box-shadow:0 2px 12px rgba(0,0,0,0.24),0 0 3px rgba(0,0,0,0.10);"></div>
<div class="a" style="left:59px;top:141px;width:1323px;height:30px;background:#fff;"></div>
<svg class="a" style="left:70px;top:150.5px;" width="9.5" height="8.6" viewBox="0 0 9.5 8.6"><rect x="0.5" y="0.5" width="8.5" height="7.6" rx="0.8" fill="#f2f2f2" stroke="#c4c4c4"/><path d="M1.5 2h3" stroke="#f5c98b"/><path d="M5 2h3" stroke="#cfcfcf"/><rect x="1.6" y="3.6" width="3" height="3.2" fill="#f7be72"/><rect x="5.4" y="3.6" width="2.2" height="3.2" fill="#f9d3a0"/></svg>
<div class="t" style="left:88px;top:150.34px;font-size:12px;color:#8c8c8c;letter-spacing:-0.17px">ViewModel Editor - PersonSeeker</div>
<svg class="a" style="left:1261px;top:150px;" width="14" height="10" viewBox="0 0 14 10"><path d="M1 5.5H12" stroke="#8a8a8a" stroke-width="1" fill="none"/></svg>
<svg class="a" style="left:1307px;top:149px;" width="12" height="12" viewBox="0 0 12 12"><rect x="1.5" y="1.5" width="9" height="9" stroke="#7a7a7a" stroke-width="1" fill="none"/></svg>
<svg class="a" style="left:1353px;top:149px;" width="12" height="12" viewBox="0 0 12 12"><path d="M1 1L11 11M11 1L1 11" stroke="#7a7a7a" stroke-width="1" fill="none"/></svg>
<div class="t" style="left:75px;top:183.19px;font-size:11px;color:#000;letter-spacing:-0.19px">ViewModel under edit:</div>
<div class="a" style="left:184px;top:178px;width:363px;height:21px;background:#fff;border:1px solid #7a7a7a;"></div>
<div class="t" style="left:187px;top:183.19px;font-size:11px;color:#000;letter-spacing:-0.25px">PersonSeeker : Person</div>
<svg class="a" style="left:532px;top:185px;" width="10" height="7" viewBox="0 0 10 7"><path d="M1 1 L5 5 L9 1" stroke="#333" stroke-width="1.2" fill="none"/></svg>
<div class="a" style="left:553px;top:181px;width:13px;height:13px;background:#fff;border:1px solid #333;"><svg width="13" height="13" viewBox="0 0 13 13" style="position:absolute;left:-1px;top:-1px"><path d="M3 6.5 L5.3 9 L10 3.5" stroke="#111" stroke-width="1.5" fill="none"/></svg></div>
<div class="t" style="left:571.5px;top:183.19px;font-size:11px;color:#000;letter-spacing:-0.1px">Categ</div>
<div class="a" style="left:608px;top:177px;width:97px;height:21px;background:#e1e1e1;border:1px solid #adadad;"></div>
<div class="t" style="left:608px;top:182.50px;width:97px;text-align:center;font-size:11px;color:#000;letter-spacing:-0.15px">Add ViewModel</div>
<div class="a" style="left:713px;top:177px;width:97px;height:21px;background:#e1e1e1;border:1px solid #adadad;"></div>
<div class="t" style="left:713px;top:182.50px;width:97px;text-align:center;font-size:11px;color:#000;letter-spacing:-0.15px">Action definitions</div>
<div class="a" style="left:818px;top:177px;width:97px;height:21px;background:#e1e1e1;border:1px solid #adadad;"></div>
<div class="t" style="left:818px;top:182.50px;width:97px;text-align:center;font-size:11px;color:#000;letter-spacing:-0.15px">New Editor</div>
<div class="a" style="left:923px;top:177px;width:97px;height:21px;background:#e1e1e1;border:1px solid #adadad;"></div>
<div class="t" style="left:923px;top:182.50px;width:97px;text-align:center;font-size:11px;color:#000;letter-spacing:-0.15px">Action CrossRef</div>
<div class="t" style="left:65px;top:220.93px;font-size:8px;color:#000;">Filter:</div>
<div class="a" style="left:87px;top:217px;width:250px;height:14px;background:#fff;border:1px solid #8a8a8a;"></div>
<div class="t" style="left:341.5px;top:220.93px;font-size:8px;color:#0000ff;">Index</div>
<div class="t" style="left:365px;top:220.93px;font-size:8px;color:#0000ff;">AutoFormPerson</div>
<div class="t" style="left:429.5px;top:220.93px;font-size:8px;color:#0000ff;">PersonSeeker</div>
<div class="a" style="left:1335px;top:214px;width:36px;height:18px;background:#90ee90;"></div>
<div class="t" style="left:1337px;top:217.28px;font-size:11.6px;color:#000;letter-spacing:-0.2px">UIFirst</div>
<div class="a" style="left:65px;top:234px;width:574px;height:650px;background:#fff;border:1px solid #7f8592;border-right:none;border-bottom:none;"></div>
<div class="a" style="left:66px;top:235px;width:573px;height:631px;overflow:hidden;">
<div class="a" style="left:26px;top:6px;width:341px;height:323px;background:#90ee90;border-radius:3px;"></div>
<div class="t" style="left:31px;top:13.26px;font-size:16px;color:#000;white-space:pre;letter-spacing:-0.05px">PersonSeeker : Person  (No Root - no self</div>
<div class="a" style="left:330.5px;top:14.5px;width:13.5px;height:12.5px;background:#fff;border:1px solid #333;"></div>
<div class="t" style="left:345px;top:13.26px;font-size:16px;color:#000;">)</div>
<div class="a" style="left:32px;top:30px;width:13px;height:13px;background:#fff;border:1px solid #333;"></div>
<div class="t" style="left:51px;top:33.23px;font-size:8px;color:#000;">Display sub column</div>
<div class="t" style="left:31px;top:44.69px;font-size:11px;color:#222;font-weight:bold;letter-spacing:-0.35px">CodeComment</div>
<div class="t" style="left:31px;top:58.04px;font-size:12px;color:#000;">&lt;Write a line on why this ViewModel exists&gt;</div>
<div class="a" style="left:31px;top:71px;width:98.5px;height:12.5px;background:#e1e1e1;border:1px solid #707070;"></div>
<div class="t" style="left:31px;top:73.05px;width:98.5px;text-align:center;font-size:9px;color:#000;letter-spacing:0px">Add column from model</div>
<svg class="a" style="left:37px;top:89.19999999999999px;" width="15" height="10" viewBox="0 0 15 10"><rect x="0" y="0.2" width="4.8" height="2.5" rx="1.2" fill="#d6d6d6"/><rect x="0" y="6.2" width="4.8" height="2.5" rx="1.2" fill="#d6d6d6"/><rect x="4.9" y="0" width="9.6" height="9.2" rx="2" fill="#fff"/><path d="M7.2 7.2 L9.6 2 L12 7.2 M8 5.4 H11.2" stroke="#f7941d" stroke-width="1" fill="none"/></svg>
<div class="t" style="left:52px;top:90.89px;font-size:11px;color:#000;">Filter : vSeekParam</div>
<svg class="a" style="left:37px;top:107.19999999999999px;" width="15" height="10" viewBox="0 0 15 10"><rect x="0" y="0.2" width="4.8" height="2.5" rx="1.2" fill="#d6d6d6"/><rect x="0" y="6.2" width="4.8" height="2.5" rx="1.2" fill="#d6d6d6"/><rect x="4.9" y="0" width="9.6" height="9.2" rx="2" fill="#fff"/><circle cx="8.6" cy="4" r="2.4" fill="none" stroke="#f7941d" stroke-width="1" stroke-dasharray="1.2 0.9"/><path d="M7.5 4 l1 1 l1.6 -2" stroke="#f7941d" stroke-width="0.8" fill="none"/><circle cx="11.6" cy="6.4" r="1.6" fill="none" stroke="#b0b0b0" stroke-width="0.9"/></svg>
<div class="t" style="left:52px;top:109.19px;font-size:11px;color:#000;letter-spacing:-0.03px">Search : EAL: vSeekIntValue:=Integer.Parse(vSeekParam);</div>
<div class="t" style="left:96px;top:121.39px;font-size:11px;color:#000;">vSeekParamWildcard:=&#x27;%&#x27;+vSeekParam+&#x27;%&#x27;;</div>
<div class="t" style="left:96px;top:133.89px;font-size:11px;color:#000;">selfVM.Search</div>
<svg class="a" style="left:37px;top:150.2px;" width="15" height="10" viewBox="0 0 15 10"><rect x="0" y="0.2" width="4.8" height="2.5" rx="1.2" fill="#d6d6d6"/><rect x="0" y="6.2" width="4.8" height="2.5" rx="1.2" fill="#d6d6d6"/><rect x="4.9" y="0" width="9.6" height="9.2" rx="2" fill="#fff"/><path d="M7.2 7.2 L11.6 2.8 M8.8 2.6 H11.8 V5.6" stroke="#f7941d" stroke-width="0.9" fill="none"/></svg>
<div class="t" style="left:52px;top:152.19px;font-size:11px;color:#000;">Results : vSeekerResult</div>
<div class="a" style="left:34px;top:172px;width:70.5px;height:22px;background:#fff59d;"></div>
<div class="t" style="left:37.5px;top:178.19px;font-size:11px;color:#000;font-weight:bold;letter-spacing:-0.6px">Actions</div>
<svg class="a" style="left:79.30000000000001px;top:173px;" width="20" height="20" viewBox="0 0 20 20"><g transform="translate(10,10)"><circle r="8.7" fill="#fff" stroke="#111" stroke-width="1"/><path d="M-3.5 -1.5 L0 2 L3.5 -1.5" stroke="#111" stroke-width="1.4" fill="none"/></g></svg>
<div class="a" style="left:34px;top:193.75px;width:325px;height:102px;background:#fff59d;"></div>
<div class="t" style="left:34px;top:194.89px;font-size:11px;color:#000;font-weight:bold;letter-spacing:-0.2px">Actions leading here</div>
<div class="a" style="left:34px;top:206.3px;width:89.75px;height:13px;background:#e1e1e1;border:1px solid #707070;"></div>
<div class="t" style="left:34px;top:208.60px;width:89.75px;text-align:center;font-size:9px;color:#000;letter-spacing:0px">Class Action for show</div>
<div class="a" style="left:123.75px;top:206.3px;width:94.5px;height:13px;background:#e1e1e1;border:1px solid #707070;"></div>
<div class="t" style="left:123.75px;top:208.60px;width:94.5px;text-align:center;font-size:9px;color:#000;letter-spacing:0px">Global Action for show</div>
<div class="a" style="left:218px;top:206.3px;width:94.5px;height:13px;background:#e1e1e1;border:1px solid #707070;"></div>
<div class="t" style="left:218px;top:208.60px;width:94.5px;text-align:center;font-size:9px;color:#000;letter-spacing:0px">Global Action + Create</div>
<div class="t" style="left:34px;top:221.19px;font-size:11px;color:#1a1ae6;color:#0000ee;text-decoration:underline;">VM:AutoFormCar AutoForms/SingleLinkSwitchPreviousOwner</div>
<div class="t" style="left:34px;top:234.19px;font-size:11px;color:#1a1ae6;color:#0000ee;text-decoration:underline;letter-spacing:-0.02px">IControlTheMenuGrouping/AtAllLevels/PersonSeekerIAmInControl</div>
<div class="t" style="left:34px;top:246.19px;font-size:11px;color:#1a1ae6;color:#0000ee;text-decoration:underline;">IControlTheMenuGrouping/AtAllLevels/PersonSeekerAgain</div>
<div class="a" style="left:34px;top:268px;width:53.5px;height:13.3px;background:#e1e1e1;border:1px solid #707070;"></div>
<div class="t" style="left:34px;top:270.45px;width:53.5px;text-align:center;font-size:9px;color:#000;letter-spacing:0px">Class Action</div>
<div class="a" style="left:87.5px;top:268px;width:76.5px;height:13.3px;background:#e1e1e1;border:1px solid #707070;"></div>
<div class="t" style="left:87.5px;top:270.45px;width:76.5px;text-align:center;font-size:9px;color:#000;letter-spacing:0px">ViewModel Action</div>
<div class="t" style="left:43.25px;top:283.19px;font-size:11px;color:#1a1ae6;color:#0000ee;text-decoration:underline;">NewPerson</div>
<div class="a" style="left:100.5px;top:282.5px;width:13px;height:13px;background:#ededed;border:1px solid #8a8a8a;"></div>
<svg class="a" style="left:103.5px;top:286.0px;" width="7" height="6" viewBox="0 0 7 6"><path d="M1 5V1.5H5.5V5" stroke="#f5b96b" stroke-width="1.1" fill="none"/><path d="M3.2 2V4" stroke="#f5b96b" stroke-width="0.9"/></svg>
<div class="a" style="left:34px;top:302px;width:159px;height:22.5px;background:#2ecfc0;"></div>
<div class="t" style="left:37.5px;top:308.19px;font-size:11px;color:#000;font-weight:bold;letter-spacing:-0.13px">Variables and Validations</div>
<svg class="a" style="left:168px;top:303.20000000000005px;" width="20" height="20" viewBox="0 0 20 20"><g transform="translate(10,10)"><circle r="8.7" fill="#fff" stroke="#111" stroke-width="1"/><path d="M-3.5 -1.5 L0 2 L3.5 -1.5" stroke="#111" stroke-width="1.4" fill="none"/></g></svg>
<svg class="a" style="left:7px;top:164px;" width="8" height="8" viewBox="0 0 8 8"><path d="M7 0.5 V7 H0.5 Z" fill="#444"/></svg>
<svg class="a" style="left:360px;top:156px;" width="18" height="200" viewBox="0 0 18 200"><path d="M1 2.5 H16.5 V198" stroke="#1a1a1a" stroke-width="1.3" fill="none"/></svg>
<svg class="a" style="left:304px;top:347px;" width="74" height="13" viewBox="0 0 74 13"><path d="M73 6.5 H9" stroke="#1a1a1a" stroke-width="1.3" fill="none"/><path d="M1 6.5 L10 1.5 V11.5 Z" fill="#000"/></svg>
<div class="a" style="left:45px;top:339px;width:255px;height:167px;background:#add8e6;border-radius:3px;"></div>
<div class="t" style="left:50.5px;top:346.26px;font-size:16px;color:#000;">Person : Person</div>
<div class="t" style="left:70.5px;top:363.19px;font-size:11px;color:#1a1aff;">TV: IsSeekerResultGrid: true, MultiSelect: true</div>
<div class="a" style="left:50px;top:374.5px;width:99px;height:13.5px;background:#e1e1e1;border:1px solid #707070;"></div>
<div class="t" style="left:50px;top:377.05px;width:99px;text-align:center;font-size:9px;color:#000;letter-spacing:0px">Add column from model</div>
<svg class="a" style="left:56.2px;top:394.0px;" width="15" height="10" viewBox="0 0 15 10"><rect x="0" y="0.2" width="4.8" height="2.5" rx="1.2" fill="#ffff00"/><rect x="0" y="6.2" width="4.8" height="2.5" rx="1.2" fill="#d6d6d6"/><rect x="4.9" y="0" width="9.6" height="9.2" rx="2" fill="#fff"/><path d="M7.2 7.2 L9.6 2 L12 7.2 M8 5.4 H11.2" stroke="#f7941d" stroke-width="1" fill="none"/></svg>
<div class="t" style="left:71.19999999999999px;top:394.89px;font-size:11px;color:#000;">AsString : self.asString</div>
<svg class="a" style="left:56.2px;top:412.20000000000005px;" width="15" height="10" viewBox="0 0 15 10"><rect x="0" y="0.2" width="4.8" height="2.5" rx="1.2" fill="#ffff00"/><rect x="0" y="6.2" width="4.8" height="2.5" rx="1.2" fill="#d6d6d6"/><rect x="4.9" y="0" width="9.6" height="9.2" rx="2" fill="#fff"/><path d="M7.2 7.2 L9.6 2 L12 7.2 M8 5.4 H11.2" stroke="#f7941d" stroke-width="1" fill="none"/></svg>
<div class="t" style="left:71.19999999999999px;top:413.19px;font-size:11px;color:#000;">Age : self.Age</div>
<svg class="a" style="left:56.2px;top:430.70000000000005px;" width="15" height="10" viewBox="0 0 15 10"><rect x="0" y="0.2" width="4.8" height="2.5" rx="1.2" fill="#ffff00"/><rect x="0" y="6.2" width="4.8" height="2.5" rx="1.2" fill="#d6d6d6"/><rect x="4.9" y="0" width="9.6" height="9.2" rx="2" fill="#fff"/><path d="M7.2 7.2 L9.6 2 L12 7.2 M8 5.4 H11.2" stroke="#f7941d" stroke-width="1" fill="none"/></svg>
<div class="t" style="left:71.19999999999999px;top:431.69px;font-size:11px;color:#000;">Name : self.Name</div>
<div class="a" style="left:53px;top:451.25px;width:239.5px;height:47px;background:#fff59d;"></div>
<div class="a" style="left:53.5px;top:451.29999999999995px;width:53.5px;height:13px;background:#e1e1e1;border:1px solid #707070;"></div>
<div class="t" style="left:53.5px;top:453.60px;width:53.5px;text-align:center;font-size:9px;color:#000;letter-spacing:0px">Class Action</div>
<div class="a" style="left:106.75px;top:451.29999999999995px;width:76px;height:13px;background:#e1e1e1;border:1px solid #707070;"></div>
<div class="t" style="left:106.75px;top:453.60px;width:76px;text-align:center;font-size:9px;color:#000;letter-spacing:0px">ViewModel Action</div>
<div class="t" style="left:62.5px;top:466.19px;font-size:11px;color:#1a1ae6;color:#0000ee;text-decoration:underline;">ShowPerson</div>
<div class="a" style="left:125px;top:467px;width:13px;height:13px;background:#ededed;border:1px solid #8a8a8a;"></div>
<svg class="a" style="left:128px;top:470.5px;" width="7" height="6" viewBox="0 0 7 6"><path d="M1 5V1.5H5.5V5" stroke="#f5b96b" stroke-width="1.1" fill="none"/><path d="M3.2 2V4" stroke="#f5b96b" stroke-width="0.9"/></svg>
<div class="a" style="left:138px;top:466.25px;width:38.5px;height:15px;background:#e1e1e1;border:1px solid #707070;"></div>
<div class="t" style="left:138px;top:468.05px;width:38.5px;text-align:center;font-size:11px;color:#000;letter-spacing:0px">opt-out</div>
<div class="t" style="left:180px;top:466.19px;font-size:11px;color:#000;">(Person)</div>
<div class="t" style="left:62.5px;top:483.19px;font-size:11px;color:#1a1ae6;color:#0000ee;text-decoration:underline;">ShowPersonIAmInControl</div>
<div class="a" style="left:189.5px;top:482.5px;width:13px;height:13px;background:#ededed;border:1px solid #8a8a8a;"></div>
<svg class="a" style="left:192.5px;top:486.5px;" width="7" height="5" viewBox="0 0 7 5"><path d="M0.5 0.5 H6.5 L3.5 4.5 Z" fill="#f5b96b"/></svg>
<div class="a" style="left:203.75px;top:481.5px;width:37px;height:15px;background:#e1e1e1;border:1px solid #707070;"></div>
<div class="t" style="left:203.75px;top:483.30px;width:37px;text-align:center;font-size:11px;color:#000;letter-spacing:0px">opt-out</div>
<div class="t" style="left:244.2px;top:483.19px;font-size:11px;color:#000;">(Person)</div>
<div class="a" style="left:45px;top:516px;width:540px;height:83px;background:#ffa07a;border-radius:3px;"></div>
<div class="t" style="left:50px;top:522.66px;font-size:16px;color:#000;">seekName : Person</div>
<div class="t" style="left:70px;top:539.79px;font-size:11px;color:#1a1aff;">TV: Eco.HiliteGridColumn: Person.Name</div>
<div class="a" style="left:50px;top:552.3px;width:99px;height:13.5px;background:#e1e1e1;border:1px solid #707070;"></div>
<div class="t" style="left:50px;top:554.85px;width:99px;text-align:center;font-size:9px;color:#000;letter-spacing:0px">Add column from model</div>
<svg class="a" style="left:55.5px;top:570.7px;" width="15" height="10" viewBox="0 0 15 10"><rect x="0" y="0.2" width="4.8" height="2.5" rx="1.2" fill="#d6d6d6"/><rect x="0" y="6.2" width="4.8" height="2.5" rx="1.2" fill="#ffff00"/><rect x="4.9" y="0" width="9.6" height="9.2" rx="2" fill="#fff"/><path d="M7.2 7.2 L9.6 2 L12 7.2 M8 5.4 H11.2" stroke="#f7941d" stroke-width="1" fill="none"/></svg>
<div class="t" style="left:70.69999999999999px;top:572.09px;font-size:11px;color:#000;">Crit1 : Person.allinstances-&gt;select(a|a.Name.sqllikecaseinsensitive(vSeekParamWildcard) or (a.Name=</div>
<div class="a" style="left:45px;top:609px;width:332.5px;height:40px;background:#ffa07a;border-radius:3px;"></div>
<div class="t" style="left:50px;top:615.66px;font-size:16px;color:#000;">seekcrit : Person</div>
<svg class="a" style="left:104px;top:390px;" width="150" height="110" viewBox="0 0 150 110"><g filter="url(#ash)"><path d="M132.9 11.5 L53 54.7 L51.3 50.9 L35.9 72.6 L66.2 69.7 L62.8 61.5 L133.5 13 Z" fill="#00b0f0"/><circle cx="24.8" cy="83.3" r="10.2" fill="none" stroke="#00aeef" stroke-width="3.8"/></g><defs><filter id="ash" x="-20%" y="-20%" width="140%" height="140%"><feDropShadow dx="1.2" dy="1.5" stdDeviation="1.2" flood-color="#000" flood-opacity="0.35"/></filter></defs></svg>
</div>
<div class="a" style="left:639px;top:234px;width:14px;height:632px;background:#f0f0f0;"></div>
<div class="a" style="left:639px;top:251px;width:14px;height:539px;background:#cdcdcd;"></div>
<svg class="a" style="left:642.5px;top:239.5px;" width="10" height="8" viewBox="0 0 10 8"><path d="M1.3 5.8 L5 2 L8.7 5.8" stroke="#8c8c8c" stroke-width="1.4" fill="none"/></svg>
<svg class="a" style="left:642px;top:855px;" width="9" height="7" viewBox="0 0 9 7"><path d="M1 1.5 L4.5 5 L8 1.5" stroke="#8a8a8a" stroke-width="1.2" fill="none"/></svg>
<div class="a" style="left:66px;top:866px;width:587px;height:17px;background:#f0f0f0;"></div>
<div class="a" style="left:82px;top:866px;width:404px;height:17px;background:#cdcdcd;"></div>
<svg class="a" style="left:70px;top:870px;" width="7" height="9" viewBox="0 0 7 9"><path d="M5 1 L1.5 4.5 L5 8" stroke="#8a8a8a" stroke-width="1.2" fill="none"/></svg>
<svg class="a" style="left:626px;top:870px;" width="7" height="9" viewBox="0 0 7 9"><path d="M2 1 L5.5 4.5 L2 8" stroke="#8a8a8a" stroke-width="1.2" fill="none"/></svg>
<div class="a" style="left:65px;top:883px;width:589px;height:3px;background:#a9a9a9;"></div>
<div class="a" style="left:653px;top:234px;width:3px;height:804px;background:#a9a9a9;"></div>
<div class="a" style="left:65px;top:886px;width:588px;height:152px;background:#fff;border:1px solid #9a9aa4;border-right:none;border-top:none;"></div>
<div class="t" style="left:661.5px;top:241.19px;font-size:11px;color:#000;letter-spacing:-0.1px">Use placing hints:</div>
<div class="a" style="left:772px;top:240px;width:13px;height:13px;background:#fff;border:1px solid #333;"><svg width="13" height="13" viewBox="0 0 13 13" style="position:absolute;left:-1px;top:-1px"><path d="M3 6.5 L5.3 9 L10 3.5" stroke="#111" stroke-width="1.5" fill="none"/></svg></div>
<div class="t" style="left:661.5px;top:256.79px;font-size:11px;color:#000;letter-spacing:-0.1px">CodeGen :</div>
<div class="a" style="left:772px;top:256px;width:13px;height:13px;background:#fff;border:1px solid #333;"></div>
<div class="a" style="left:1292px;top:240px;width:13px;height:13px;background:#fff;border:1px solid #333;"><svg width="13" height="13" viewBox="0 0 13 13" style="position:absolute;left:-1px;top:-1px"><path d="M3 6.5 L5.3 9 L10 3.5" stroke="#111" stroke-width="1.5" fill="none"/></svg></div>
<div class="t" style="left:1311px;top:239.19px;font-size:11px;color:#000;letter-spacing:-0.1px">Label on top</div>
<div class="a" style="left:1190px;top:254px;width:75.5px;height:16.5px;background:#e1e1e1;border:1px solid #707070;"></div>
<div class="t" style="left:1190px;top:256.85px;width:75.5px;text-align:center;font-size:11px;color:#000;letter-spacing:-0.1px">Tagged values</div>
<div class="a" style="left:1265px;top:254px;width:106px;height:16.5px;background:#e1e1e1;border:1px solid #707070;"></div>
<div class="t" style="left:1265px;top:256.85px;width:106px;text-align:center;font-size:11px;color:#000;letter-spacing:-0.1px">Analyze expressions</div>
<div class="a" style="left:656px;top:277px;width:720px;height:16px;background:#90ee90;"></div>
<div class="t" style="left:659px;top:277.65px;font-size:14px;color:#000;">The Root level of the ViewModel</div>
<svg class="a" style="left:657.5px;top:294.8px;" width="20" height="20" viewBox="0 0 20 20"><g transform="translate(10,10)"><circle r="8.7" fill="#fff" stroke="#111" stroke-width="1"/><path d="M-3.5 1.8 L0 -1.8 L3.5 1.8" stroke="#111" stroke-width="1.4" fill="none"/></g></svg>
<div class="t" style="left:681px;top:299.79px;font-size:11px;color:#000;letter-spacing:-0.1px">Properties</div>
<div class="t" style="left:662px;top:322.79px;font-size:11px;color:#000;letter-spacing:-0.1px">Name:</div>
<div class="a" style="left:772px;top:320px;width:598px;height:15px;background:#fff;border:1px solid #8a8a8a;"></div>
<div class="t" style="left:775px;top:322.65px;font-size:11px;color:#000;">PersonSeeker</div>
<div class="t" style="left:662px;top:338.79px;font-size:11px;color:#000;letter-spacing:-0.1px">Class:</div>
<div class="a" style="left:772px;top:336px;width:129.5px;height:16.5px;background:#e1e1e1;border:1px solid #adadad;"></div>
<div class="t" style="left:778px;top:339.40px;font-size:11px;color:#000;">Person</div>
<svg class="a" style="left:888.5px;top:341.25px;" width="8" height="6" viewBox="0 0 8 6"><path d="M1 1.2 L4 4.2 L7 1.2" stroke="#5a5a5a" stroke-width="1" fill="none"/></svg>
<div class="a" style="left:902px;top:336px;width:20px;height:16.5px;background:#e1e1e1;border:1px solid #707070;"></div>
<div class="t" style="left:902px;top:338.55px;width:20px;text-align:center;font-size:11px;color:#000;letter-spacing:0px">...</div>
<div class="t" style="left:1224.8px;top:338.79px;font-size:11px;color:#000;letter-spacing:-0.1px">DuckType:</div>
<div class="a" style="left:1280px;top:336px;width:68.5px;height:16.5px;background:#e1e1e1;border:1px solid #adadad;"></div>
<svg class="a" style="left:1335.5px;top:341.25px;" width="8" height="6" viewBox="0 0 8 6"><path d="M1 1.2 L4 4.2 L7 1.2" stroke="#5a5a5a" stroke-width="1" fill="none"/></svg>
<div class="a" style="left:1350px;top:336px;width:20px;height:16.5px;background:#e1e1e1;border:1px solid #707070;"></div>
<div class="t" style="left:1350px;top:338.55px;width:20px;text-align:center;font-size:11px;color:#000;letter-spacing:0px">...</div>
<div class="t" style="left:662px;top:356.19px;font-size:11px;color:#000;letter-spacing:-0.1px">Column Count:</div>
<div class="a" style="left:772px;top:353px;width:74.5px;height:15.5px;background:#fff;border:1px solid #8a8a8a;"></div>
<div class="t" style="left:775.5px;top:354.90px;font-size:11px;color:#000;">10</div>
<div class="t" style="left:852px;top:356.19px;font-size:11px;color:#000;letter-spacing:-0.1px">Column Width:</div>
<div class="a" style="left:952.5px;top:353px;width:74.5px;height:15.5px;background:#fff;border:1px solid #8a8a8a;"></div>
<div class="t" style="left:956.0px;top:354.90px;font-size:11px;color:#000;">50</div>
<div class="a" style="left:1033px;top:354px;width:13px;height:13px;background:#fff;border:1px solid #333;"></div>
<div class="t" style="left:1052px;top:352.19px;font-size:11px;color:#000;letter-spacing:-0.1px">Hide Menubar</div>
<div class="t" style="left:662px;top:370.89px;font-size:11px;color:#000;letter-spacing:-0.1px">Row Count:</div>
<div class="a" style="left:772px;top:368.5px;width:74.5px;height:15px;background:#fff;border:1px solid #8a8a8a;"></div>
<div class="t" style="left:775.5px;top:371.15px;font-size:11px;color:#000;">5</div>
<div class="t" style="left:852px;top:370.89px;font-size:11px;color:#000;letter-spacing:-0.1px">Row Height:</div>
<div class="a" style="left:952.5px;top:368.5px;width:74.5px;height:15px;background:#fff;border:1px solid #8a8a8a;"></div>
<div class="t" style="left:956.0px;top:371.15px;font-size:11px;color:#000;">20</div>
<div class="a" style="left:1033px;top:369px;width:13px;height:13px;background:#fff;border:1px solid #333;"></div>
<div class="t" style="left:1052px;top:368.19px;font-size:11px;color:#000;letter-spacing:-0.1px">Hide Sidebar</div>
<div class="a" style="left:1122px;top:369px;width:13px;height:13px;background:#fff;border:1px solid #333;"></div>
<div class="t" style="left:1140.8px;top:368.19px;font-size:11px;color:#000;letter-spacing:-0.02px">Savebar (Save/Cancel in Menu)</div>
<div class="t" style="left:662px;top:387.69px;font-size:11px;color:#000;letter-spacing:-0.1px">Taborder:</div>
<div class="a" style="left:772px;top:383.5px;width:598px;height:18.5px;background:#e1e1e1;border:1px solid #adadad;"></div>
<div class="t" style="left:778px;top:387.90px;font-size:11px;color:#000;">DisplayOrderYBeforeX</div>
<svg class="a" style="left:1357px;top:389.75px;" width="8" height="6" viewBox="0 0 8 6"><path d="M1 1.2 L4 4.2 L7 1.2" stroke="#5a5a5a" stroke-width="1" fill="none"/></svg>
<svg class="a" style="left:663.5px;top:403px;" width="20" height="20" viewBox="0 0 20 20"><g transform="translate(10,10)"><circle r="8.7" fill="#fff" stroke="#111" stroke-width="1"/><path d="M-3.5 -1.5 L0 2 L3.5 -1.5" stroke="#111" stroke-width="1.4" fill="none"/></g></svg>
<div class="t" style="left:687px;top:407.99px;font-size:11px;color:#000;letter-spacing:-0.1px">Constraints</div>
<div class="t" style="left:662px;top:427.19px;font-size:11px;color:#000;letter-spacing:-0.1px">Readonly Expression:</div>
<div class="a" style="left:772px;top:425.5px;width:579px;height:15px;background:#fff;border:1px solid #8a8a8a;"></div>
<div class="a" style="left:1350px;top:425.5px;width:20px;height:15px;background:#e1e1e1;border:1px solid #707070;"></div>
<div class="t" style="left:1350px;top:427.30px;width:20px;text-align:center;font-size:11px;color:#000;letter-spacing:0px">...</div>
<div class="t" style="left:662px;top:444.19px;font-size:11px;color:#000;letter-spacing:-0.1px">Access Expression:</div>
<div class="a" style="left:772px;top:441.5px;width:579px;height:15.5px;background:#fff;border:1px solid #8a8a8a;"></div>
<div class="a" style="left:1350px;top:441.5px;width:20px;height:16px;background:#e1e1e1;border:1px solid #707070;"></div>
<div class="t" style="left:1350px;top:443.80px;width:20px;text-align:center;font-size:11px;color:#000;letter-spacing:0px">...</div>
<div class="t" style="left:662px;top:460.69px;font-size:11px;color:#000;letter-spacing:-0.1px">Access Groups:</div>
<div class="a" style="left:1350px;top:458.5px;width:20px;height:15px;background:#e1e1e1;border:1px solid #707070;"></div>
<div class="t" style="left:1350px;top:460.30px;width:20px;text-align:center;font-size:11px;color:#000;letter-spacing:0px">...</div>
<div class="t" style="left:662px;top:476.19px;font-size:11px;color:#000;letter-spacing:-0.1px">Requires root object:</div>
<div class="a" style="left:773px;top:475.3px;width:13px;height:13px;background:#fff;border:1px solid #333;"></div>
<div class="t" style="left:662px;top:490.79px;font-size:11px;color:#000;letter-spacing:-0.1px">Act As For Actions:</div>
<div class="a" style="left:772px;top:490px;width:579px;height:15.5px;background:#fff;border:1px solid #8a8a8a;"></div>
<div class="a" style="left:1350px;top:490px;width:20px;height:15.5px;background:#e1e1e1;border:1px solid #707070;"></div>
<div class="t" style="left:1350px;top:492.05px;width:20px;text-align:center;font-size:11px;color:#000;letter-spacing:0px">...</div>
<div class="a" style="left:1339px;top:512px;width:35px;height:349px;background:#e0e0e0;"></div>
<div class="a" style="left:1339px;top:546.5px;width:35px;height:1px;background:#c8c8c8;"></div>
<div class="a" style="left:1339px;top:581.5px;width:35px;height:1px;background:#c8c8c8;"></div>
<div class="a" style="left:1339px;top:616.5px;width:35px;height:1px;background:#c8c8c8;"></div>
<div class="a" style="left:1339px;top:651.5px;width:35px;height:1px;background:#c8c8c8;"></div>
<div class="a" style="left:1339px;top:686.5px;width:35px;height:1px;background:#c8c8c8;"></div>
<div class="a" style="left:1339px;top:721.5px;width:35px;height:1px;background:#c8c8c8;"></div>
<div class="a" style="left:1339px;top:756.5px;width:35px;height:1px;background:#c8c8c8;"></div>
<div class="a" style="left:1339px;top:791.5px;width:35px;height:1px;background:#c8c8c8;"></div>
<div class="a" style="left:1339px;top:826.5px;width:35px;height:1px;background:#c8c8c8;"></div>
<svg class="a" style="left:1339px;top:512px;" width="35" height="35" viewBox="0 0 35 35"><rect x="9.8" y="13" width="14.2" height="11.5" fill="none" stroke="#111" stroke-width="2"/><path d="M12 23 L13 19 L22.5 9.5 Q24 8 25.5 9.5 Q27 11 25.5 12.5 L16 22 Z" fill="#111" stroke="#e0e0e0" stroke-width="1.2"/><path d="M12 23 L13 19 L22.5 9.5 Q24 8 25.5 9.5 Q27 11 25.5 12.5 L16 22 Z" fill="#111"/></svg>
<svg class="a" style="left:1339px;top:547px;" width="35" height="35" viewBox="0 0 35 35"><path d="M9.7 9.6 H24.7 V14.5 H23.3 Q23 12.3 20.5 12.3 H19 V23.5 Q19 25 22 25.2 V26.6 H12.4 V25.2 Q15.4 25 15.4 23.5 V12.3 H13.9 Q11.4 12.3 11.1 14.5 H9.7 Z" fill="#111"/></svg>
<svg class="a" style="left:1339px;top:582px;" width="35" height="35" viewBox="0 0 35 35"><path d="M21 18.5 V22.8 H12.2 V14.2 H19" stroke="#111" stroke-width="2" fill="none"/><path d="M14 17.5 L17 21.3 L23.7 12.6" stroke="#111" stroke-width="2.3" fill="none"/></svg>
<svg class="a" style="left:1339px;top:617px;" width="35" height="35" viewBox="0 0 35 35"><rect x="7.5" y="13.2" width="12" height="9.6" rx="0.8" fill="none" stroke="#111" stroke-width="1.9"/><path d="M7.5 16.5 H17.5 M7.5 19.7 H17.5" stroke="#111" stroke-width="1.6"/><path d="M24.3 11.5 V23 M21 19.3 L24.3 23.3 L27.6 19.3" stroke="#111" stroke-width="1.9" fill="none"/></svg>
<svg class="a" style="left:1339px;top:652px;" width="35" height="35" viewBox="0 0 35 35"><rect x="8" y="10" width="18" height="16" rx="1.2" fill="#1a1a1a"/><circle cx="12.5" cy="9" r="1.6" fill="none" stroke="#1a1a1a" stroke-width="1.2"/><circle cx="21.5" cy="9" r="1.6" fill="none" stroke="#1a1a1a" stroke-width="1.2"/><rect x="9.7" y="15.6" width="2.9" height="2.3" fill="#d8d8d8"/><rect x="13.6" y="15.6" width="2.9" height="2.3" fill="#d8d8d8"/><rect x="17.5" y="15.6" width="2.9" height="2.3" fill="#d8d8d8"/><rect x="21.4" y="15.6" width="2.9" height="2.3" fill="#d8d8d8"/><rect x="9.7" y="18.9" width="2.9" height="2.3" fill="#d8d8d8"/><rect x="13.6" y="18.9" width="2.9" height="2.3" fill="#d8d8d8"/><rect x="17.5" y="18.9" width="2.9" height="2.3" fill="#d8d8d8"/><rect x="21.4" y="18.9" width="2.9" height="2.3" fill="#d8d8d8"/><rect x="9.7" y="22.2" width="2.9" height="2.3" fill="#d8d8d8"/><rect x="13.6" y="22.2" width="2.9" height="2.3" fill="#d8d8d8"/><rect x="17.5" y="22.2" width="2.9" height="2.3" fill="#d8d8d8"/><rect x="21.4" y="22.2" width="2.9" height="2.3" fill="#d8d8d8"/></svg>
<svg class="a" style="left:1339px;top:687px;" width="35" height="35" viewBox="0 0 35 35"><rect x="9" y="10.2" width="16" height="13.6" fill="none" stroke="#111" stroke-width="1.9"/><path d="M13.7 12.6 L15.3 14 L17 12.2 L18.7 14 L20.3 12.6 V15.8 Q20.3 18.6 17 18.6 Q13.7 18.6 13.7 15.8 Z" fill="#111"/><path d="M17 22.8 Q12.3 22.8 11.8 18.2 Q15.6 18.6 17 22.8 Z M17 22.8 Q21.7 22.8 22.2 18.2 Q18.4 18.6 17 22.8 Z" fill="#111"/><path d="M17 18 V23" stroke="#111" stroke-width="1.2"/></svg>
<svg class="a" style="left:1339px;top:722px;" width="35" height="35" viewBox="0 0 35 35"><rect x="8.1" y="13.2" width="17.8" height="8.8" rx="2.4" fill="none" stroke="#111" stroke-width="1.7"/></svg>
<svg class="a" style="left:1339px;top:757px;" width="35" height="35" viewBox="0 0 35 35"><rect x="8.8" y="9.4" width="16.4" height="15" fill="none" stroke="#111" stroke-width="1.5"/><path d="M9 18.6 H25 M9 21 H25 M9 23.3 H25" stroke="#555" stroke-width="1.3"/></svg>
<svg class="a" style="left:1339px;top:792px;" width="35" height="35" viewBox="0 0 35 35"><path d="M17.2 10.5 L24 14 L17.2 17.5 L10.4 14 Z" fill="#0a0a0a"/><path d="M10.4 14.6 L16.8 18 V25.2 L10.4 21.8 Z" fill="#7a7a7a"/><path d="M24 14.6 L17.6 18 V25.2 L24 21.8 Z" fill="#4a4a4a"/><path d="M10.5 11.2 Q8.2 13 8.5 18 Q8.2 23 10.5 24.8 M23.9 11.2 Q26.2 13 25.9 18 Q26.2 23 23.9 24.8" stroke="#222" stroke-width="1" fill="none"/></svg>
<svg class="a" style="left:1339px;top:827px;" width="35" height="35" viewBox="0 0 35 35"><path d="M11.5 24.5 H8.5 Q7.5 24.5 7.5 23.5 V9.5 Q7.5 8.5 8.5 8.5 H27.5 Q28.5 8.5 28.5 9.5 V23.5 Q28.5 24.5 27.5 24.5 H25" stroke="#222" stroke-width="1" fill="none"/><path d="M7.5 12 H28.5" stroke="#222" stroke-width="0.9"/><path d="M9.5 10.2 H14" stroke="#222" stroke-width="1.1"/><path d="M21 10.2 H27" stroke="#222" stroke-width="1.1" stroke-dasharray="1.2 1"/><rect x="11.5" y="15.5" width="13.5" height="14" rx="2" fill="#e0e0e0" stroke="#222" stroke-width="1"/><path d="M13.5 19.5 V17.5 H15.5 M21 17.5 H23 V19.5 M23 25.5 V27.5 H21 M15.5 27.5 H13.5 V25.5" stroke="#222" stroke-width="1" fill="none"/><path d="M13.8 22.5 Q18.2 18.3 22.7 22.5 Q18.2 26.7 13.8 22.5 Z" fill="none" stroke="#222" stroke-width="1"/><circle cx="18.2" cy="22.5" r="1.5" fill="none" stroke="#222" stroke-width="1"/></svg>
<div class="t" style="left:1349.8px;top:736.15px;font-size:7.5px;color:#111;font-weight:bold;letter-spacing:-0.1px">btn</div>
<div class="t" style="left:1349.8px;top:767.77px;font-size:7px;color:#111;font-weight:bold;">list</div>
<div class="a" style="left:700px;top:610px;width:593px;height:288px;background:#e8e8e8;"></div>
<div class="a" style="left:700px;top:610px;width:582px;height:279px;background:#d3d3d3;"></div>
<div class="a" style="left:749px;top:889px;width:1px;height:9px;background:#e0e0e0;"></div>
<div class="a" style="left:799px;top:889px;width:1px;height:9px;background:#e0e0e0;"></div>
<div class="a" style="left:849px;top:889px;width:1px;height:9px;background:#e0e0e0;"></div>
<div class="a" style="left:899px;top:889px;width:1px;height:9px;background:#e0e0e0;"></div>
<div class="a" style="left:949px;top:889px;width:1px;height:9px;background:#e0e0e0;"></div>
<div class="a" style="left:982px;top:889px;width:1px;height:9px;background:#e0e0e0;"></div>
<div class="a" style="left:1032px;top:889px;width:1px;height:9px;background:#e0e0e0;"></div>
<div class="a" style="left:1082px;top:889px;width:1px;height:9px;background:#e0e0e0;"></div>
<div class="a" style="left:1132px;top:889px;width:1px;height:9px;background:#e0e0e0;"></div>
<div class="a" style="left:1182px;top:889px;width:1px;height:9px;background:#e0e0e0;"></div>
<div class="a" style="left:1232px;top:889px;width:1px;height:9px;background:#e0e0e0;"></div>
<div class="a" style="left:1282px;top:640px;width:11px;height:1px;background:#e2e2e2;"></div>
<div class="a" style="left:1282px;top:670px;width:11px;height:1px;background:#e2e2e2;"></div>
<div class="a" style="left:1282px;top:700px;width:11px;height:1px;background:#e2e2e2;"></div>
<div class="a" style="left:1282px;top:730px;width:11px;height:1px;background:#e2e2e2;"></div>
<div class="a" style="left:1282px;top:760px;width:11px;height:1px;background:#e2e2e2;"></div>
<div class="a" style="left:1282px;top:790px;width:11px;height:1px;background:#e2e2e2;"></div>
<div class="a" style="left:1282px;top:820px;width:11px;height:1px;background:#e2e2e2;"></div>
<div class="a" style="left:1282px;top:850px;width:11px;height:1px;background:#e2e2e2;"></div>
<div class="a" style="left:1282px;top:880px;width:11px;height:1px;background:#e2e2e2;"></div>
<div class="a" style="left:700px;top:613px;width:197px;height:30.5px;background:#fff;border:1px solid #c8c8c8;border-bottom:1.5px solid #777;"></div>
<div class="t" style="left:704.5px;top:616.46px;font-size:9.5px;color:#9a9a9a;">Filter</div>
<div class="a" style="left:902px;top:612px;width:76px;height:32px;background:#3465a8;border-radius:2px;box-shadow:0 1px 2px rgba(0,0,0,0.35);"></div>
<div class="t" style="left:902px;top:622.25px;font-size:14px;color:#fff;width:76px;text-align:center;">Search</div>
<div class="t" style="left:710px;top:669.53px;font-size:16.5px;color:#111;letter-spacing:-0.2px">Results</div>
<div class="a" style="left:700px;top:689.5px;width:579px;height:199px;background:#fff;border:1px solid #a8a8a8;border-radius:3px;"></div>
<div class="a" style="left:701.5px;top:713.5px;width:576px;height:1px;background:#bdbdbd;"></div>
<div class="a" style="left:791px;top:690.5px;width:1px;height:23px;background:#d8d8d8;"></div>
<div class="a" style="left:880px;top:690.5px;width:1px;height:23px;background:#d8d8d8;"></div>
<div class="a" style="left:792px;top:690.5px;width:88px;height:23px;background:#f5f5f5;"></div>
<div class="t" style="left:704.5px;top:697.19px;font-size:11px;color:#7a7a7a;letter-spacing:-0.1px">As String</div>
<div class="t" style="left:796.5px;top:696.92px;font-size:12.5px;color:#333;letter-spacing:-0.2px">Age (Years)</div>
<div class="t" style="left:885px;top:697.19px;font-size:11px;color:#7a7a7a;letter-spacing:-0.1px">Name</div>
<svg class="a" style="left:750px;top:698px;" width="9" height="9" viewBox="0 0 9 9"><path d="M0.5 0.5 H8.5 L5.5 4 V8 L3.5 7 V4 Z" fill="#ececec"/></svg>
<svg class="a" style="left:864px;top:698px;" width="9" height="9" viewBox="0 0 9 9"><path d="M0.5 0.5 H8.5 L5.5 4 V8 L3.5 7 V4 Z" fill="#ececec"/></svg>
<svg class="a" style="left:915px;top:698px;" width="9" height="9" viewBox="0 0 9 9"><path d="M0.5 0.5 H8.5 L5.5 4 V8 L3.5 7 V4 Z" fill="#ececec"/></svg>
<svg class="a" style="left:1250px;top:693px;" width="26" height="9" viewBox="0 0 26 9"><circle cx="5.5" cy="4.5" r="2.6" fill="#2f62ad"/><circle cx="13.3" cy="4.5" r="2.6" fill="#2f62ad"/><circle cx="20.6" cy="4.5" r="2.6" fill="#2f62ad"/></svg>
<div class="a" style="left:657px;top:1002px;width:13px;height:13px;background:#fff;border:1px solid #333;"></div>
<div class="t" style="left:676px;top:1000.89px;font-size:11px;color:#000;letter-spacing:-0.1px">Show grid lines</div>
<div class="a" style="left:754px;top:1002px;width:13px;height:13px;background:#fff;border:1px solid #333;"></div>
<div class="t" style="left:772.8px;top:1000.89px;font-size:11px;color:#000;letter-spacing:-0.1px">Show tab-order</div>
<div class="a" style="left:851px;top:997px;width:17px;height:22.5px;background:#e1e1e1;border:1px solid #707070;"></div>
<div class="t" style="left:851px;top:1003.05px;width:17px;text-align:center;font-size:11px;color:#000;letter-spacing:0px">Fit</div>
<div class="t" style="left:655.6px;top:1025.23px;font-size:8px;color:#000;">Screen size marker</div>
<div class="a" style="left:725px;top:1023px;width:19px;height:13px;background:#fff;border:1px solid #c0c0c0;"></div>
<div class="t" style="left:728px;top:1026.11px;font-size:8px;color:#000;">758</div>
<div class="t" style="left:744.5px;top:1025.23px;font-size:8px;color:#000;">X</div>
<div class="a" style="left:749.5px;top:1023px;width:19px;height:13px;background:#fff;border:1px solid #c0c0c0;"></div>
<div class="t" style="left:752.5px;top:1026.11px;font-size:8px;color:#000;">600</div>
<div class="t" style="left:769px;top:1025.23px;font-size:8px;color:#000;">SuggestedZoom</div>
<div class="a" style="left:827.5px;top:1023px;width:29px;height:13px;background:#fff;border:1px solid #c0c0c0;"></div>
<div class="a" style="left:857px;top:1020.5px;width:79px;height:17px;background:#e1e1e1;border:1px solid #707070;"></div>
<div class="t" style="left:857px;top:1024.80px;width:79px;text-align:center;font-size:8px;color:#000;letter-spacing:0px">Set shrink zoom to fit</div>
<div class="a" style="left:946px;top:1020.5px;width:149px;height:17px;background:#e1e1e1;border:1px solid #707070;"></div>
<div class="t" style="left:946px;top:1023.30px;width:149px;text-align:center;font-size:11px;color:#000;letter-spacing:-0.02px">WebApp Prototype Edit-Mode</div>
</body></html>
